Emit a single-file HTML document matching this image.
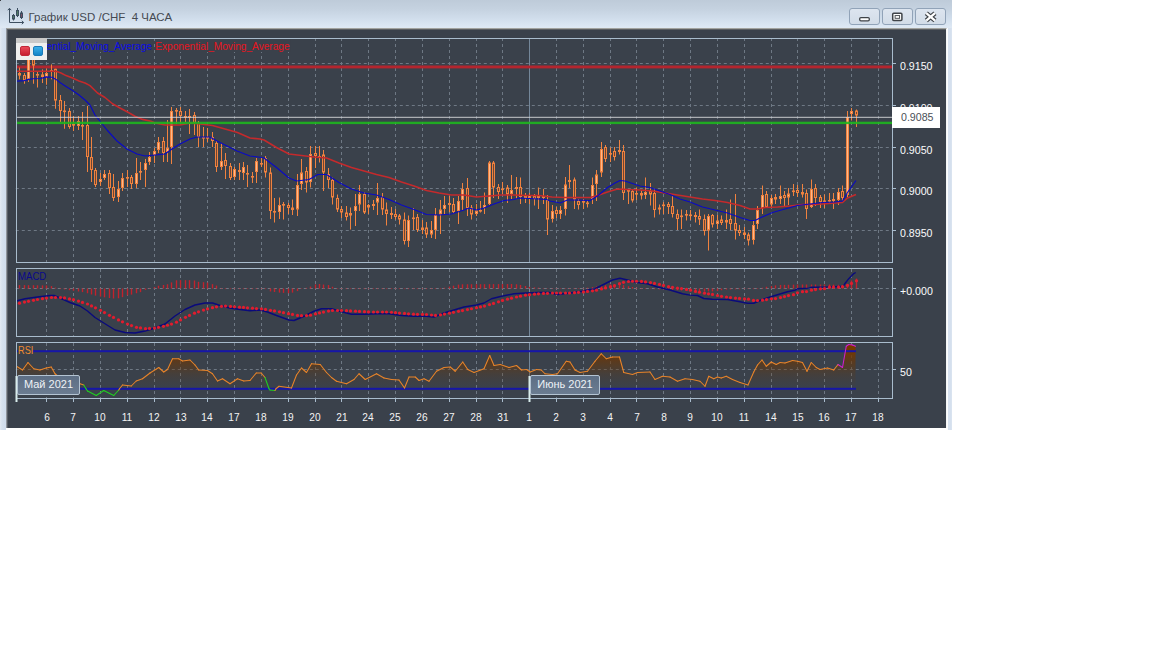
<!DOCTYPE html>
<html><head><meta charset="utf-8"><title>chart</title>
<style>
html,body{margin:0;padding:0;background:#fff;}
body{width:1152px;height:648px;overflow:hidden;position:relative;font-family:"Liberation Sans",sans-serif;}
#win{position:absolute;left:0;top:0;width:952px;height:428px;background:linear-gradient(#becbd9 0px,#c5d2e0 9px,#d1deec 19px,#dde8f4 27px,#dfe8f2 28px);}#win:before{content:"";position:absolute;left:0;top:0;width:1px;height:1px;background:#3a3d42;}
#lb{position:absolute;left:0;top:28px;width:6px;height:401.5px;background:linear-gradient(90deg,#e3eaf3 0px,#d6e1ee 2px,#cfdcec 6px);}
#rb{position:absolute;left:947px;top:28px;width:5px;height:402px;background:linear-gradient(90deg,#fbfcfd 0px,#fbfcfd 1px,#d5e0ee 1px,#d5e0ee 4px,#dde6f1 5px);}
#panel{position:absolute;left:6px;top:28px;width:941px;height:400px;box-sizing:border-box;background:#3a414b;border-left:1px solid #8f949b;border-top:1px solid #a2a39f;border-right:1px solid #f4f6f8;}#panel:before{content:"";position:absolute;left:0;right:0;top:0;height:1px;background:#5d6064;}#panel:after{content:"";position:absolute;left:0;top:1px;bottom:0;width:1px;background:#565c65;}
#title{position:absolute;left:28.5px;top:9.5px;font-size:11.5px;color:#454a52;white-space:pre;letter-spacing:0px;line-height:15px;}
.btn{position:absolute;top:8px;width:30.5px;height:17px;border:1px solid #91a3b8;border-radius:3px;background:linear-gradient(#dde5ef,#d2dce8);box-sizing:border-box;}
svg{position:absolute;left:0;top:0;}
.dl{position:absolute;top:411px;width:30px;text-align:center;font-size:11px;line-height:13px;color:#f4f4f4;transform:scaleX(0.92);}
.pl{position:absolute;left:900px;font-size:11px;line-height:13px;color:#fbfbfb;transform:scaleX(0.966);transform-origin:0 0;}
#legend{position:absolute;left:16px;top:38px;width:31px;height:22px;background:#efefef;}
#legend:before{content:"";position:absolute;left:0;top:0;right:0;height:4.5px;background:#c9c9c9;}
.ic{position:absolute;top:8px;width:10px;height:10px;border-radius:2px;}
.lt{position:absolute;top:39px;height:13px;font-size:10.5px;line-height:15px;white-space:pre;background:#3a414b;transform:scaleX(0.965);transform-origin:0 0;overflow:hidden;}
#cur{position:absolute;left:892px;top:107px;width:48px;height:21px;background:#fff;color:#4a4f57;font-size:11px;line-height:21px;padding-left:9px;box-sizing:border-box;}
.mon{position:absolute;top:375px;height:19.5px;box-sizing:border-box;border:1px solid #b4c4d3;border-radius:2px;background:linear-gradient(#5d6e84,#6b7c91);color:#eef2f6;font-size:11px;line-height:17px;text-align:center;letter-spacing:0;}
.ind{position:absolute;left:18px;font-size:11px;line-height:13px;transform-origin:0 0;background:#3a414b;}
</style></head><body>
<div id="win"></div><div id="lb"></div><div id="rb"></div>
<div id="title">График USD /CHF  4 ЧАСА</div>
<svg width="28" height="28" viewBox="0 0 28 28" style="left:0;top:0"><g fill="none" stroke="#3c4e60" stroke-width="1"><path d="M9.5 8.5V22.5H23.5"/><path d="M7.8 10.2L9.5 8.3L11.2 10.2M21.8 20.8L23.7 22.5L21.8 24.2"/><path d="M13.5 14V20.5M17.5 8V17M21.5 11V19"/></g><g fill="#4f7a63" stroke="#3c4e60" stroke-width="1"><rect x="12.5" y="15.5" width="2" height="3.5"/><rect x="16.5" y="10.5" width="2" height="5"/><rect x="20.5" y="13" width="2" height="4.5" fill="#7a5068"/></g></svg>
<div class="btn" style="left:849px"><svg width="30" height="16" style="left:-1px;top:-1px"><rect x="10.7" y="9.6" width="9.6" height="3.2" rx="1.2" fill="#fff" stroke="#3f4348" stroke-width="1.3"/></svg></div>
<div class="btn" style="left:882px"><svg width="30" height="16" style="left:-1px;top:-1px"><rect x="10.7" y="5.3" width="9.2" height="7.2" rx="1" fill="#fff" stroke="#3f4348" stroke-width="1.5"/><rect x="13.1" y="7.6" width="4.5" height="2.7" fill="#fff" stroke="#3f4348" stroke-width="0.9"/></svg></div>
<div class="btn" style="left:915px"><svg width="30" height="16" style="left:-1px;top:-1px"><path d="M11.3 5.2L20 12.6M20 5.2L11.3 12.6" stroke="#3f4348" stroke-width="4.6"/><path d="M11.3 5.2L20 12.6M20 5.2L11.3 12.6" stroke="#fff" stroke-width="2.3"/></svg></div>
<div id="panel"></div>
<svg width="952" height="430" viewBox="0 0 952 430">
<line x1="46.5" y1="38" x2="46.5" y2="262" stroke="#6e7884" stroke-width="1" stroke-dasharray="3 3"/>
<line x1="73.5" y1="38" x2="73.5" y2="262" stroke="#6e7884" stroke-width="1" stroke-dasharray="3 3"/>
<line x1="100.5" y1="38" x2="100.5" y2="262" stroke="#6e7884" stroke-width="1" stroke-dasharray="3 3"/>
<line x1="127.5" y1="38" x2="127.5" y2="262" stroke="#6e7884" stroke-width="1" stroke-dasharray="3 3"/>
<line x1="154.5" y1="38" x2="154.5" y2="262" stroke="#6e7884" stroke-width="1" stroke-dasharray="3 3"/>
<line x1="180.5" y1="38" x2="180.5" y2="262" stroke="#6e7884" stroke-width="1" stroke-dasharray="3 3"/>
<line x1="207.5" y1="38" x2="207.5" y2="262" stroke="#6e7884" stroke-width="1" stroke-dasharray="3 3"/>
<line x1="234.5" y1="38" x2="234.5" y2="262" stroke="#6e7884" stroke-width="1" stroke-dasharray="3 3"/>
<line x1="261.5" y1="38" x2="261.5" y2="262" stroke="#6e7884" stroke-width="1" stroke-dasharray="3 3"/>
<line x1="288.5" y1="38" x2="288.5" y2="262" stroke="#6e7884" stroke-width="1" stroke-dasharray="3 3"/>
<line x1="315.5" y1="38" x2="315.5" y2="262" stroke="#6e7884" stroke-width="1" stroke-dasharray="3 3"/>
<line x1="341.5" y1="38" x2="341.5" y2="262" stroke="#6e7884" stroke-width="1" stroke-dasharray="3 3"/>
<line x1="368.5" y1="38" x2="368.5" y2="262" stroke="#6e7884" stroke-width="1" stroke-dasharray="3 3"/>
<line x1="395.5" y1="38" x2="395.5" y2="262" stroke="#6e7884" stroke-width="1" stroke-dasharray="3 3"/>
<line x1="422.5" y1="38" x2="422.5" y2="262" stroke="#6e7884" stroke-width="1" stroke-dasharray="3 3"/>
<line x1="449.5" y1="38" x2="449.5" y2="262" stroke="#6e7884" stroke-width="1" stroke-dasharray="3 3"/>
<line x1="476.5" y1="38" x2="476.5" y2="262" stroke="#6e7884" stroke-width="1" stroke-dasharray="3 3"/>
<line x1="502.5" y1="38" x2="502.5" y2="262" stroke="#6e7884" stroke-width="1" stroke-dasharray="3 3"/>
<line x1="529.5" y1="38" x2="529.5" y2="262" stroke="#74879a" stroke-width="1"/>
<line x1="556.5" y1="38" x2="556.5" y2="262" stroke="#6e7884" stroke-width="1" stroke-dasharray="3 3"/>
<line x1="583.5" y1="38" x2="583.5" y2="262" stroke="#6e7884" stroke-width="1" stroke-dasharray="3 3"/>
<line x1="610.5" y1="38" x2="610.5" y2="262" stroke="#6e7884" stroke-width="1" stroke-dasharray="3 3"/>
<line x1="636.5" y1="38" x2="636.5" y2="262" stroke="#6e7884" stroke-width="1" stroke-dasharray="3 3"/>
<line x1="663.5" y1="38" x2="663.5" y2="262" stroke="#6e7884" stroke-width="1" stroke-dasharray="3 3"/>
<line x1="690.5" y1="38" x2="690.5" y2="262" stroke="#6e7884" stroke-width="1" stroke-dasharray="3 3"/>
<line x1="717.5" y1="38" x2="717.5" y2="262" stroke="#6e7884" stroke-width="1" stroke-dasharray="3 3"/>
<line x1="744.5" y1="38" x2="744.5" y2="262" stroke="#6e7884" stroke-width="1" stroke-dasharray="3 3"/>
<line x1="771.5" y1="38" x2="771.5" y2="262" stroke="#6e7884" stroke-width="1" stroke-dasharray="3 3"/>
<line x1="797.5" y1="38" x2="797.5" y2="262" stroke="#6e7884" stroke-width="1" stroke-dasharray="3 3"/>
<line x1="824.5" y1="38" x2="824.5" y2="262" stroke="#6e7884" stroke-width="1" stroke-dasharray="3 3"/>
<line x1="851.5" y1="38" x2="851.5" y2="262" stroke="#6e7884" stroke-width="1" stroke-dasharray="3 3"/>
<line x1="878.5" y1="38" x2="878.5" y2="262" stroke="#6e7884" stroke-width="1" stroke-dasharray="3 3"/>
<line x1="15.8" y1="63.5" x2="892" y2="63.5" stroke="#6e7884" stroke-width="1" stroke-dasharray="3 3"/>
<line x1="892" y1="63.5" x2="896" y2="63.5" stroke="#a9bccd" stroke-width="1"/>
<line x1="15.8" y1="105.5" x2="892" y2="105.5" stroke="#6e7884" stroke-width="1" stroke-dasharray="3 3"/>
<line x1="892" y1="105.5" x2="896" y2="105.5" stroke="#a9bccd" stroke-width="1"/>
<line x1="15.8" y1="147.5" x2="892" y2="147.5" stroke="#6e7884" stroke-width="1" stroke-dasharray="3 3"/>
<line x1="892" y1="147.5" x2="896" y2="147.5" stroke="#a9bccd" stroke-width="1"/>
<line x1="15.8" y1="188.5" x2="892" y2="188.5" stroke="#6e7884" stroke-width="1" stroke-dasharray="3 3"/>
<line x1="892" y1="188.5" x2="896" y2="188.5" stroke="#a9bccd" stroke-width="1"/>
<line x1="15.8" y1="230.5" x2="892" y2="230.5" stroke="#6e7884" stroke-width="1" stroke-dasharray="3 3"/>
<line x1="892" y1="230.5" x2="896" y2="230.5" stroke="#a9bccd" stroke-width="1"/>
<line x1="46.5" y1="269" x2="46.5" y2="336" stroke="#6e7884" stroke-width="1" stroke-dasharray="3 3"/>
<line x1="73.5" y1="269" x2="73.5" y2="336" stroke="#6e7884" stroke-width="1" stroke-dasharray="3 3"/>
<line x1="100.5" y1="269" x2="100.5" y2="336" stroke="#6e7884" stroke-width="1" stroke-dasharray="3 3"/>
<line x1="127.5" y1="269" x2="127.5" y2="336" stroke="#6e7884" stroke-width="1" stroke-dasharray="3 3"/>
<line x1="154.5" y1="269" x2="154.5" y2="336" stroke="#6e7884" stroke-width="1" stroke-dasharray="3 3"/>
<line x1="180.5" y1="269" x2="180.5" y2="336" stroke="#6e7884" stroke-width="1" stroke-dasharray="3 3"/>
<line x1="207.5" y1="269" x2="207.5" y2="336" stroke="#6e7884" stroke-width="1" stroke-dasharray="3 3"/>
<line x1="234.5" y1="269" x2="234.5" y2="336" stroke="#6e7884" stroke-width="1" stroke-dasharray="3 3"/>
<line x1="261.5" y1="269" x2="261.5" y2="336" stroke="#6e7884" stroke-width="1" stroke-dasharray="3 3"/>
<line x1="288.5" y1="269" x2="288.5" y2="336" stroke="#6e7884" stroke-width="1" stroke-dasharray="3 3"/>
<line x1="315.5" y1="269" x2="315.5" y2="336" stroke="#6e7884" stroke-width="1" stroke-dasharray="3 3"/>
<line x1="341.5" y1="269" x2="341.5" y2="336" stroke="#6e7884" stroke-width="1" stroke-dasharray="3 3"/>
<line x1="368.5" y1="269" x2="368.5" y2="336" stroke="#6e7884" stroke-width="1" stroke-dasharray="3 3"/>
<line x1="395.5" y1="269" x2="395.5" y2="336" stroke="#6e7884" stroke-width="1" stroke-dasharray="3 3"/>
<line x1="422.5" y1="269" x2="422.5" y2="336" stroke="#6e7884" stroke-width="1" stroke-dasharray="3 3"/>
<line x1="449.5" y1="269" x2="449.5" y2="336" stroke="#6e7884" stroke-width="1" stroke-dasharray="3 3"/>
<line x1="476.5" y1="269" x2="476.5" y2="336" stroke="#6e7884" stroke-width="1" stroke-dasharray="3 3"/>
<line x1="502.5" y1="269" x2="502.5" y2="336" stroke="#6e7884" stroke-width="1" stroke-dasharray="3 3"/>
<line x1="529.5" y1="269" x2="529.5" y2="336" stroke="#74879a" stroke-width="1"/>
<line x1="556.5" y1="269" x2="556.5" y2="336" stroke="#6e7884" stroke-width="1" stroke-dasharray="3 3"/>
<line x1="583.5" y1="269" x2="583.5" y2="336" stroke="#6e7884" stroke-width="1" stroke-dasharray="3 3"/>
<line x1="610.5" y1="269" x2="610.5" y2="336" stroke="#6e7884" stroke-width="1" stroke-dasharray="3 3"/>
<line x1="636.5" y1="269" x2="636.5" y2="336" stroke="#6e7884" stroke-width="1" stroke-dasharray="3 3"/>
<line x1="663.5" y1="269" x2="663.5" y2="336" stroke="#6e7884" stroke-width="1" stroke-dasharray="3 3"/>
<line x1="690.5" y1="269" x2="690.5" y2="336" stroke="#6e7884" stroke-width="1" stroke-dasharray="3 3"/>
<line x1="717.5" y1="269" x2="717.5" y2="336" stroke="#6e7884" stroke-width="1" stroke-dasharray="3 3"/>
<line x1="744.5" y1="269" x2="744.5" y2="336" stroke="#6e7884" stroke-width="1" stroke-dasharray="3 3"/>
<line x1="771.5" y1="269" x2="771.5" y2="336" stroke="#6e7884" stroke-width="1" stroke-dasharray="3 3"/>
<line x1="797.5" y1="269" x2="797.5" y2="336" stroke="#6e7884" stroke-width="1" stroke-dasharray="3 3"/>
<line x1="824.5" y1="269" x2="824.5" y2="336" stroke="#6e7884" stroke-width="1" stroke-dasharray="3 3"/>
<line x1="851.5" y1="269" x2="851.5" y2="336" stroke="#6e7884" stroke-width="1" stroke-dasharray="3 3"/>
<line x1="878.5" y1="269" x2="878.5" y2="336" stroke="#6e7884" stroke-width="1" stroke-dasharray="3 3"/>
<line x1="15.8" y1="288.5" x2="892" y2="288.5" stroke="#6e7884" stroke-width="1" stroke-dasharray="3 3"/>
<line x1="892" y1="288.5" x2="896" y2="288.5" stroke="#a9bccd" stroke-width="1"/>
<line x1="46.5" y1="343" x2="46.5" y2="398" stroke="#6e7884" stroke-width="1" stroke-dasharray="3 3"/>
<line x1="73.5" y1="343" x2="73.5" y2="398" stroke="#6e7884" stroke-width="1" stroke-dasharray="3 3"/>
<line x1="100.5" y1="343" x2="100.5" y2="398" stroke="#6e7884" stroke-width="1" stroke-dasharray="3 3"/>
<line x1="127.5" y1="343" x2="127.5" y2="398" stroke="#6e7884" stroke-width="1" stroke-dasharray="3 3"/>
<line x1="154.5" y1="343" x2="154.5" y2="398" stroke="#6e7884" stroke-width="1" stroke-dasharray="3 3"/>
<line x1="180.5" y1="343" x2="180.5" y2="398" stroke="#6e7884" stroke-width="1" stroke-dasharray="3 3"/>
<line x1="207.5" y1="343" x2="207.5" y2="398" stroke="#6e7884" stroke-width="1" stroke-dasharray="3 3"/>
<line x1="234.5" y1="343" x2="234.5" y2="398" stroke="#6e7884" stroke-width="1" stroke-dasharray="3 3"/>
<line x1="261.5" y1="343" x2="261.5" y2="398" stroke="#6e7884" stroke-width="1" stroke-dasharray="3 3"/>
<line x1="288.5" y1="343" x2="288.5" y2="398" stroke="#6e7884" stroke-width="1" stroke-dasharray="3 3"/>
<line x1="315.5" y1="343" x2="315.5" y2="398" stroke="#6e7884" stroke-width="1" stroke-dasharray="3 3"/>
<line x1="341.5" y1="343" x2="341.5" y2="398" stroke="#6e7884" stroke-width="1" stroke-dasharray="3 3"/>
<line x1="368.5" y1="343" x2="368.5" y2="398" stroke="#6e7884" stroke-width="1" stroke-dasharray="3 3"/>
<line x1="395.5" y1="343" x2="395.5" y2="398" stroke="#6e7884" stroke-width="1" stroke-dasharray="3 3"/>
<line x1="422.5" y1="343" x2="422.5" y2="398" stroke="#6e7884" stroke-width="1" stroke-dasharray="3 3"/>
<line x1="449.5" y1="343" x2="449.5" y2="398" stroke="#6e7884" stroke-width="1" stroke-dasharray="3 3"/>
<line x1="476.5" y1="343" x2="476.5" y2="398" stroke="#6e7884" stroke-width="1" stroke-dasharray="3 3"/>
<line x1="502.5" y1="343" x2="502.5" y2="398" stroke="#6e7884" stroke-width="1" stroke-dasharray="3 3"/>
<line x1="529.5" y1="343" x2="529.5" y2="398" stroke="#74879a" stroke-width="1"/>
<line x1="556.5" y1="343" x2="556.5" y2="398" stroke="#6e7884" stroke-width="1" stroke-dasharray="3 3"/>
<line x1="583.5" y1="343" x2="583.5" y2="398" stroke="#6e7884" stroke-width="1" stroke-dasharray="3 3"/>
<line x1="610.5" y1="343" x2="610.5" y2="398" stroke="#6e7884" stroke-width="1" stroke-dasharray="3 3"/>
<line x1="636.5" y1="343" x2="636.5" y2="398" stroke="#6e7884" stroke-width="1" stroke-dasharray="3 3"/>
<line x1="663.5" y1="343" x2="663.5" y2="398" stroke="#6e7884" stroke-width="1" stroke-dasharray="3 3"/>
<line x1="690.5" y1="343" x2="690.5" y2="398" stroke="#6e7884" stroke-width="1" stroke-dasharray="3 3"/>
<line x1="717.5" y1="343" x2="717.5" y2="398" stroke="#6e7884" stroke-width="1" stroke-dasharray="3 3"/>
<line x1="744.5" y1="343" x2="744.5" y2="398" stroke="#6e7884" stroke-width="1" stroke-dasharray="3 3"/>
<line x1="771.5" y1="343" x2="771.5" y2="398" stroke="#6e7884" stroke-width="1" stroke-dasharray="3 3"/>
<line x1="797.5" y1="343" x2="797.5" y2="398" stroke="#6e7884" stroke-width="1" stroke-dasharray="3 3"/>
<line x1="824.5" y1="343" x2="824.5" y2="398" stroke="#6e7884" stroke-width="1" stroke-dasharray="3 3"/>
<line x1="851.5" y1="343" x2="851.5" y2="398" stroke="#6e7884" stroke-width="1" stroke-dasharray="3 3"/>
<line x1="878.5" y1="343" x2="878.5" y2="398" stroke="#6e7884" stroke-width="1" stroke-dasharray="3 3"/>
<line x1="15.8" y1="369.5" x2="892" y2="369.5" stroke="#6e7884" stroke-width="1" stroke-dasharray="3 3"/>
<line x1="892" y1="369.5" x2="896" y2="369.5" stroke="#a9bccd" stroke-width="1"/>
<defs><clipPath id="cm"><rect x="17" y="39" width="875" height="223"/></clipPath><linearGradient id="rsig" gradientUnits="userSpaceOnUse" x1="0" y1="350" x2="0" y2="390"><stop offset="0" stop-color="#763800" stop-opacity="1"/><stop offset="0.3" stop-color="#6c3604" stop-opacity="0.62"/><stop offset="0.6" stop-color="#683808" stop-opacity="0.24"/><stop offset="0.9" stop-color="#5a3a1a" stop-opacity="0.04"/><stop offset="1" stop-color="#5a3a1a" stop-opacity="0"/></linearGradient><clipPath id="cr"><rect x="17" y="343" width="875" height="55"/></clipPath></defs>
<g clip-path="url(#cm)">
<rect x="16" y="65.5" width="877" height="2.9" fill="#b3252e"/>
<line x1="19.5" y1="67.5" x2="19.5" y2="79.4" stroke="#f0823f" stroke-width="1"/>
<rect x="18.5" y="73.5" width="2" height="1.6" fill="#6e4633" stroke="#f0823f" stroke-width="1"/>
<line x1="24.5" y1="73" x2="24.5" y2="83.75" stroke="#f0823f" stroke-width="1"/>
<rect x="23.5" y="75.5" width="2" height="4.6" fill="#6e4633" stroke="#f0823f" stroke-width="1"/>
<line x1="28.5" y1="50" x2="28.5" y2="82" stroke="#f0823f" stroke-width="1"/>
<rect x="27.5" y="52.5" width="2" height="26.4" fill="#ffb98a" stroke="#f0823f" stroke-width="1"/>
<line x1="33.5" y1="52" x2="33.5" y2="83.75" stroke="#f0823f" stroke-width="1"/>
<rect x="32.5" y="54.5" width="2" height="10.6" fill="#6e4633" stroke="#f0823f" stroke-width="1"/>
<line x1="37.5" y1="71" x2="37.5" y2="87.5" stroke="#f0823f" stroke-width="1"/>
<rect x="36.5" y="74.5" width="2" height="0.6" fill="#6e4633" stroke="#f0823f" stroke-width="1"/>
<line x1="42.5" y1="69.4" x2="42.5" y2="83" stroke="#f0823f" stroke-width="1"/>
<rect x="41.5" y="74.9" width="2" height="1.6" fill="#6e4633" stroke="#f0823f" stroke-width="1"/>
<line x1="46.5" y1="68.75" x2="46.5" y2="84.75" stroke="#f0823f" stroke-width="1"/>
<rect x="45.5" y="73.5" width="2" height="3" fill="#ffb98a" stroke="#f0823f" stroke-width="1"/>
<line x1="51.5" y1="64.4" x2="51.5" y2="79.4" stroke="#f0823f" stroke-width="1"/>
<rect x="50.5" y="70.5" width="2" height="0.6" fill="#ffb98a" stroke="#f0823f" stroke-width="1"/>
<line x1="55.5" y1="68.75" x2="55.5" y2="108.75" stroke="#f0823f" stroke-width="1"/>
<rect x="54.5" y="69.25" width="2" height="30.85" fill="#6e4633" stroke="#f0823f" stroke-width="1"/>
<line x1="60.5" y1="95" x2="60.5" y2="122" stroke="#f0823f" stroke-width="1"/>
<rect x="59.5" y="100.5" width="2" height="10" fill="#6e4633" stroke="#f0823f" stroke-width="1"/>
<line x1="64.5" y1="101" x2="64.5" y2="128.75" stroke="#f0823f" stroke-width="1"/>
<rect x="63.5" y="111" width="2" height="0.6" fill="#6e4633" stroke="#f0823f" stroke-width="1"/>
<line x1="69.5" y1="108" x2="69.5" y2="128.75" stroke="#f0823f" stroke-width="1"/>
<rect x="68.5" y="111.5" width="2" height="15" fill="#6e4633" stroke="#f0823f" stroke-width="1"/>
<line x1="73.5" y1="116" x2="73.5" y2="131" stroke="#f0823f" stroke-width="1"/>
<rect x="72.5" y="124.5" width="2" height="0.6" fill="#ffb98a" stroke="#f0823f" stroke-width="1"/>
<line x1="78.5" y1="116" x2="78.5" y2="130" stroke="#f0823f" stroke-width="1"/>
<rect x="77.5" y="121.5" width="2" height="4" fill="#ffb98a" stroke="#f0823f" stroke-width="1"/>
<line x1="82.5" y1="112" x2="82.5" y2="140" stroke="#f0823f" stroke-width="1"/>
<rect x="81.5" y="125.5" width="2" height="0.6" fill="#6e4633" stroke="#f0823f" stroke-width="1"/>
<line x1="87.5" y1="106" x2="87.5" y2="172" stroke="#f0823f" stroke-width="1"/>
<rect x="86.5" y="125.5" width="2" height="31" fill="#6e4633" stroke="#f0823f" stroke-width="1"/>
<line x1="91.5" y1="137" x2="91.5" y2="182" stroke="#f0823f" stroke-width="1"/>
<rect x="90.5" y="157.5" width="2" height="12" fill="#6e4633" stroke="#f0823f" stroke-width="1"/>
<line x1="95.5" y1="168" x2="95.5" y2="187" stroke="#f0823f" stroke-width="1"/>
<rect x="94.5" y="170.5" width="2" height="14" fill="#6e4633" stroke="#f0823f" stroke-width="1"/>
<line x1="100.5" y1="173" x2="100.5" y2="186" stroke="#f0823f" stroke-width="1"/>
<rect x="99.5" y="179.5" width="2" height="2" fill="#ffb98a" stroke="#f0823f" stroke-width="1"/>
<line x1="104.5" y1="170" x2="104.5" y2="180" stroke="#f0823f" stroke-width="1"/>
<rect x="103.5" y="174.5" width="2" height="3" fill="#ffb98a" stroke="#f0823f" stroke-width="1"/>
<line x1="109.5" y1="170" x2="109.5" y2="194" stroke="#f0823f" stroke-width="1"/>
<rect x="108.5" y="173.5" width="2" height="14" fill="#6e4633" stroke="#f0823f" stroke-width="1"/>
<line x1="113.5" y1="174" x2="113.5" y2="201" stroke="#f0823f" stroke-width="1"/>
<rect x="112.5" y="187.5" width="2" height="10" fill="#6e4633" stroke="#f0823f" stroke-width="1"/>
<line x1="118.5" y1="181" x2="118.5" y2="202" stroke="#f0823f" stroke-width="1"/>
<rect x="117.5" y="189.5" width="2" height="7" fill="#ffb98a" stroke="#f0823f" stroke-width="1"/>
<line x1="122.5" y1="173" x2="122.5" y2="191" stroke="#f0823f" stroke-width="1"/>
<rect x="121.5" y="178.5" width="2" height="9" fill="#ffb98a" stroke="#f0823f" stroke-width="1"/>
<line x1="127.5" y1="170" x2="127.5" y2="187" stroke="#f0823f" stroke-width="1"/>
<rect x="126.5" y="177.5" width="2" height="0.6" fill="#ffb98a" stroke="#f0823f" stroke-width="1"/>
<line x1="131.5" y1="175" x2="131.5" y2="189" stroke="#f0823f" stroke-width="1"/>
<rect x="130.5" y="177.5" width="2" height="6" fill="#6e4633" stroke="#f0823f" stroke-width="1"/>
<line x1="136.5" y1="158" x2="136.5" y2="188" stroke="#f0823f" stroke-width="1"/>
<rect x="135.5" y="173.5" width="2" height="10" fill="#ffb98a" stroke="#f0823f" stroke-width="1"/>
<line x1="140.5" y1="162" x2="140.5" y2="180" stroke="#f0823f" stroke-width="1"/>
<rect x="139.5" y="171.5" width="2" height="0.6" fill="#ffb98a" stroke="#f0823f" stroke-width="1"/>
<line x1="145.5" y1="159" x2="145.5" y2="187" stroke="#f0823f" stroke-width="1"/>
<rect x="144.5" y="163.5" width="2" height="6" fill="#ffb98a" stroke="#f0823f" stroke-width="1"/>
<line x1="149.5" y1="152" x2="149.5" y2="165" stroke="#f0823f" stroke-width="1"/>
<rect x="148.5" y="157.5" width="2" height="4" fill="#ffb98a" stroke="#f0823f" stroke-width="1"/>
<line x1="154.5" y1="148" x2="154.5" y2="163" stroke="#f0823f" stroke-width="1"/>
<rect x="153.5" y="151.5" width="2" height="3" fill="#ffb98a" stroke="#f0823f" stroke-width="1"/>
<line x1="158.5" y1="137" x2="158.5" y2="153" stroke="#f0823f" stroke-width="1"/>
<rect x="157.5" y="142.5" width="2" height="7" fill="#ffb98a" stroke="#f0823f" stroke-width="1"/>
<line x1="163.5" y1="137" x2="163.5" y2="162" stroke="#f0823f" stroke-width="1"/>
<rect x="162.5" y="141.5" width="2" height="11" fill="#6e4633" stroke="#f0823f" stroke-width="1"/>
<line x1="167.5" y1="120" x2="167.5" y2="162" stroke="#f0823f" stroke-width="1"/>
<rect x="166.5" y="148.5" width="2" height="3" fill="#ffb98a" stroke="#f0823f" stroke-width="1"/>
<line x1="171.5" y1="107" x2="171.5" y2="164" stroke="#f0823f" stroke-width="1"/>
<rect x="170.5" y="111.5" width="2" height="35" fill="#ffb98a" stroke="#f0823f" stroke-width="1"/>
<line x1="176.5" y1="108" x2="176.5" y2="124" stroke="#f0823f" stroke-width="1"/>
<rect x="175.5" y="110.5" width="2" height="0.6" fill="#ffb98a" stroke="#f0823f" stroke-width="1"/>
<line x1="180.5" y1="107" x2="180.5" y2="123" stroke="#f0823f" stroke-width="1"/>
<rect x="179.5" y="111.5" width="2" height="4" fill="#6e4633" stroke="#f0823f" stroke-width="1"/>
<line x1="185.5" y1="111" x2="185.5" y2="122" stroke="#f0823f" stroke-width="1"/>
<rect x="184.5" y="116.5" width="2" height="0.6" fill="#6e4633" stroke="#f0823f" stroke-width="1"/>
<line x1="189.5" y1="109" x2="189.5" y2="134" stroke="#f0823f" stroke-width="1"/>
<rect x="188.5" y="116.5" width="2" height="0.6" fill="#ffb98a" stroke="#f0823f" stroke-width="1"/>
<line x1="194.5" y1="112" x2="194.5" y2="135" stroke="#f0823f" stroke-width="1"/>
<rect x="193.5" y="115.5" width="2" height="7" fill="#6e4633" stroke="#f0823f" stroke-width="1"/>
<line x1="198.5" y1="121" x2="198.5" y2="147" stroke="#f0823f" stroke-width="1"/>
<rect x="197.5" y="123.5" width="2" height="13" fill="#6e4633" stroke="#f0823f" stroke-width="1"/>
<line x1="203.5" y1="127" x2="203.5" y2="147" stroke="#f0823f" stroke-width="1"/>
<rect x="202.5" y="137.5" width="2" height="0.6" fill="#6e4633" stroke="#f0823f" stroke-width="1"/>
<line x1="207.5" y1="128" x2="207.5" y2="142" stroke="#f0823f" stroke-width="1"/>
<rect x="206.5" y="137.5" width="2" height="0.6" fill="#ffb98a" stroke="#f0823f" stroke-width="1"/>
<line x1="212.5" y1="132" x2="212.5" y2="147" stroke="#f0823f" stroke-width="1"/>
<rect x="211.5" y="137.5" width="2" height="3" fill="#6e4633" stroke="#f0823f" stroke-width="1"/>
<line x1="216.5" y1="141" x2="216.5" y2="172" stroke="#f0823f" stroke-width="1"/>
<rect x="215.5" y="143.5" width="2" height="23" fill="#6e4633" stroke="#f0823f" stroke-width="1"/>
<line x1="221.5" y1="143" x2="221.5" y2="170" stroke="#f0823f" stroke-width="1"/>
<rect x="220.5" y="161.5" width="2" height="5" fill="#ffb98a" stroke="#f0823f" stroke-width="1"/>
<line x1="225.5" y1="153" x2="225.5" y2="179" stroke="#f0823f" stroke-width="1"/>
<rect x="224.5" y="160.5" width="2" height="5" fill="#6e4633" stroke="#f0823f" stroke-width="1"/>
<line x1="230.5" y1="163" x2="230.5" y2="180" stroke="#f0823f" stroke-width="1"/>
<rect x="229.5" y="166.5" width="2" height="11" fill="#6e4633" stroke="#f0823f" stroke-width="1"/>
<line x1="234.5" y1="167" x2="234.5" y2="180" stroke="#f0823f" stroke-width="1"/>
<rect x="233.5" y="169.5" width="2" height="7" fill="#ffb98a" stroke="#f0823f" stroke-width="1"/>
<line x1="239.5" y1="163" x2="239.5" y2="180" stroke="#f0823f" stroke-width="1"/>
<rect x="238.5" y="170.5" width="2" height="1" fill="#6e4633" stroke="#f0823f" stroke-width="1"/>
<line x1="243.5" y1="162" x2="243.5" y2="180" stroke="#f0823f" stroke-width="1"/>
<rect x="242.5" y="167.5" width="2" height="5" fill="#ffb98a" stroke="#f0823f" stroke-width="1"/>
<line x1="247.5" y1="165" x2="247.5" y2="187" stroke="#f0823f" stroke-width="1"/>
<rect x="246.5" y="173.5" width="2" height="0.6" fill="#6e4633" stroke="#f0823f" stroke-width="1"/>
<line x1="252.5" y1="172" x2="252.5" y2="183" stroke="#f0823f" stroke-width="1"/>
<rect x="251.5" y="176.5" width="2" height="0.6" fill="#6e4633" stroke="#f0823f" stroke-width="1"/>
<line x1="256.5" y1="158" x2="256.5" y2="183" stroke="#f0823f" stroke-width="1"/>
<rect x="255.5" y="161.5" width="2" height="10" fill="#ffb98a" stroke="#f0823f" stroke-width="1"/>
<line x1="261.5" y1="157" x2="261.5" y2="167" stroke="#f0823f" stroke-width="1"/>
<rect x="260.5" y="163.5" width="2" height="0.6" fill="#6e4633" stroke="#f0823f" stroke-width="1"/>
<line x1="265.5" y1="156" x2="265.5" y2="177.5" stroke="#f0823f" stroke-width="1"/>
<rect x="264.5" y="158.5" width="2" height="13.5" fill="#6e4633" stroke="#f0823f" stroke-width="1"/>
<line x1="270.5" y1="167.5" x2="270.5" y2="219" stroke="#f0823f" stroke-width="1"/>
<rect x="269.5" y="173" width="2" height="37.5" fill="#6e4633" stroke="#f0823f" stroke-width="1"/>
<line x1="274.5" y1="198" x2="274.5" y2="222.5" stroke="#f0823f" stroke-width="1"/>
<rect x="273.5" y="211.5" width="2" height="0.6" fill="#6e4633" stroke="#f0823f" stroke-width="1"/>
<line x1="279.5" y1="197.5" x2="279.5" y2="219" stroke="#f0823f" stroke-width="1"/>
<rect x="278.5" y="205.5" width="2" height="6" fill="#ffb98a" stroke="#f0823f" stroke-width="1"/>
<line x1="283.5" y1="202" x2="283.5" y2="219.5" stroke="#f0823f" stroke-width="1"/>
<rect x="282.5" y="204.5" width="2" height="0.6" fill="#ffb98a" stroke="#f0823f" stroke-width="1"/>
<line x1="288.5" y1="203" x2="288.5" y2="214" stroke="#f0823f" stroke-width="1"/>
<rect x="287.5" y="205.5" width="2" height="2" fill="#6e4633" stroke="#f0823f" stroke-width="1"/>
<line x1="292.5" y1="199.5" x2="292.5" y2="215" stroke="#f0823f" stroke-width="1"/>
<rect x="291.5" y="208" width="2" height="1.5" fill="#6e4633" stroke="#f0823f" stroke-width="1"/>
<line x1="297.5" y1="174" x2="297.5" y2="216" stroke="#f0823f" stroke-width="1"/>
<rect x="296.5" y="185.5" width="2" height="23.5" fill="#ffb98a" stroke="#f0823f" stroke-width="1"/>
<line x1="301.5" y1="159" x2="301.5" y2="190" stroke="#f0823f" stroke-width="1"/>
<rect x="300.5" y="173" width="2" height="10.5" fill="#ffb98a" stroke="#f0823f" stroke-width="1"/>
<line x1="306.5" y1="167" x2="306.5" y2="192.5" stroke="#f0823f" stroke-width="1"/>
<rect x="305.5" y="171.5" width="2" height="10.5" fill="#6e4633" stroke="#f0823f" stroke-width="1"/>
<line x1="310.5" y1="146" x2="310.5" y2="187.5" stroke="#f0823f" stroke-width="1"/>
<rect x="309.5" y="154.5" width="2" height="27" fill="#ffb98a" stroke="#f0823f" stroke-width="1"/>
<line x1="315.5" y1="146" x2="315.5" y2="168" stroke="#f0823f" stroke-width="1"/>
<rect x="314.5" y="153.5" width="2" height="2" fill="#6e4633" stroke="#f0823f" stroke-width="1"/>
<line x1="319.5" y1="146" x2="319.5" y2="162.5" stroke="#f0823f" stroke-width="1"/>
<rect x="318.5" y="156.5" width="2" height="0.6" fill="#6e4633" stroke="#f0823f" stroke-width="1"/>
<line x1="323.5" y1="150" x2="323.5" y2="191" stroke="#f0823f" stroke-width="1"/>
<rect x="322.5" y="155" width="2" height="17" fill="#6e4633" stroke="#f0823f" stroke-width="1"/>
<line x1="328.5" y1="168" x2="328.5" y2="188" stroke="#f0823f" stroke-width="1"/>
<rect x="327.5" y="174.5" width="2" height="5" fill="#6e4633" stroke="#f0823f" stroke-width="1"/>
<line x1="332.5" y1="177.5" x2="332.5" y2="204.5" stroke="#f0823f" stroke-width="1"/>
<rect x="331.5" y="180.5" width="2" height="16.5" fill="#6e4633" stroke="#f0823f" stroke-width="1"/>
<line x1="337.5" y1="194.5" x2="337.5" y2="212" stroke="#f0823f" stroke-width="1"/>
<rect x="336.5" y="198.5" width="2" height="10.5" fill="#6e4633" stroke="#f0823f" stroke-width="1"/>
<line x1="341.5" y1="206" x2="341.5" y2="218" stroke="#f0823f" stroke-width="1"/>
<rect x="340.5" y="209.5" width="2" height="2.5" fill="#6e4633" stroke="#f0823f" stroke-width="1"/>
<line x1="346.5" y1="206" x2="346.5" y2="220.5" stroke="#f0823f" stroke-width="1"/>
<rect x="345.5" y="213" width="2" height="3.5" fill="#6e4633" stroke="#f0823f" stroke-width="1"/>
<line x1="350.5" y1="207.5" x2="350.5" y2="229.5" stroke="#f0823f" stroke-width="1"/>
<rect x="349.5" y="213.5" width="2" height="1.5" fill="#ffb98a" stroke="#f0823f" stroke-width="1"/>
<line x1="355.5" y1="194" x2="355.5" y2="226" stroke="#f0823f" stroke-width="1"/>
<rect x="354.5" y="206.5" width="2" height="4" fill="#ffb98a" stroke="#f0823f" stroke-width="1"/>
<line x1="359.5" y1="185" x2="359.5" y2="211" stroke="#f0823f" stroke-width="1"/>
<rect x="358.5" y="194.5" width="2" height="9.5" fill="#ffb98a" stroke="#f0823f" stroke-width="1"/>
<line x1="364.5" y1="192.5" x2="364.5" y2="214" stroke="#f0823f" stroke-width="1"/>
<rect x="363.5" y="194.5" width="2" height="17.5" fill="#6e4633" stroke="#f0823f" stroke-width="1"/>
<line x1="368.5" y1="204" x2="368.5" y2="214" stroke="#f0823f" stroke-width="1"/>
<rect x="367.5" y="205.5" width="2" height="1.5" fill="#ffb98a" stroke="#f0823f" stroke-width="1"/>
<line x1="373.5" y1="200" x2="373.5" y2="210" stroke="#f0823f" stroke-width="1"/>
<rect x="372.5" y="204.5" width="2" height="1" fill="#6e4633" stroke="#f0823f" stroke-width="1"/>
<line x1="377.5" y1="183" x2="377.5" y2="215" stroke="#f0823f" stroke-width="1"/>
<rect x="376.5" y="198.5" width="2" height="3.5" fill="#ffb98a" stroke="#f0823f" stroke-width="1"/>
<line x1="382.5" y1="193" x2="382.5" y2="215" stroke="#f0823f" stroke-width="1"/>
<rect x="381.5" y="197.5" width="2" height="11.5" fill="#6e4633" stroke="#f0823f" stroke-width="1"/>
<line x1="386.5" y1="202.5" x2="386.5" y2="225.5" stroke="#f0823f" stroke-width="1"/>
<rect x="385.5" y="210" width="2" height="3.5" fill="#6e4633" stroke="#f0823f" stroke-width="1"/>
<line x1="391.5" y1="207" x2="391.5" y2="219" stroke="#f0823f" stroke-width="1"/>
<rect x="390.5" y="213.5" width="2" height="1" fill="#6e4633" stroke="#f0823f" stroke-width="1"/>
<line x1="395.5" y1="209" x2="395.5" y2="219.5" stroke="#f0823f" stroke-width="1"/>
<rect x="394.5" y="214.5" width="2" height="2" fill="#6e4633" stroke="#f0823f" stroke-width="1"/>
<line x1="399.5" y1="214" x2="399.5" y2="224.5" stroke="#f0823f" stroke-width="1"/>
<rect x="398.5" y="216" width="2" height="3" fill="#6e4633" stroke="#f0823f" stroke-width="1"/>
<line x1="404.5" y1="212.5" x2="404.5" y2="244.5" stroke="#f0823f" stroke-width="1"/>
<rect x="403.5" y="220" width="2" height="20.5" fill="#6e4633" stroke="#f0823f" stroke-width="1"/>
<line x1="408.5" y1="215.5" x2="408.5" y2="247" stroke="#f0823f" stroke-width="1"/>
<rect x="407.5" y="220.5" width="2" height="20" fill="#ffb98a" stroke="#f0823f" stroke-width="1"/>
<line x1="413.5" y1="208" x2="413.5" y2="230" stroke="#f0823f" stroke-width="1"/>
<rect x="412.5" y="218" width="2" height="0.6" fill="#ffb98a" stroke="#f0823f" stroke-width="1"/>
<line x1="417.5" y1="214" x2="417.5" y2="232" stroke="#f0823f" stroke-width="1"/>
<rect x="416.5" y="217.5" width="2" height="12" fill="#6e4633" stroke="#f0823f" stroke-width="1"/>
<line x1="422.5" y1="220" x2="422.5" y2="234" stroke="#f0823f" stroke-width="1"/>
<rect x="421.5" y="228" width="2" height="1.5" fill="#ffb98a" stroke="#f0823f" stroke-width="1"/>
<line x1="426.5" y1="222" x2="426.5" y2="238" stroke="#f0823f" stroke-width="1"/>
<rect x="425.5" y="228" width="2" height="6" fill="#6e4633" stroke="#f0823f" stroke-width="1"/>
<line x1="431.5" y1="221" x2="431.5" y2="238" stroke="#f0823f" stroke-width="1"/>
<rect x="430.5" y="230.5" width="2" height="3.5" fill="#ffb98a" stroke="#f0823f" stroke-width="1"/>
<line x1="435.5" y1="208" x2="435.5" y2="239" stroke="#f0823f" stroke-width="1"/>
<rect x="434.5" y="215.5" width="2" height="14" fill="#ffb98a" stroke="#f0823f" stroke-width="1"/>
<line x1="440.5" y1="200" x2="440.5" y2="234" stroke="#f0823f" stroke-width="1"/>
<rect x="439.5" y="210" width="2" height="4" fill="#ffb98a" stroke="#f0823f" stroke-width="1"/>
<line x1="444.5" y1="196" x2="444.5" y2="214" stroke="#f0823f" stroke-width="1"/>
<rect x="443.5" y="205.5" width="2" height="3" fill="#ffb98a" stroke="#f0823f" stroke-width="1"/>
<line x1="449.5" y1="196" x2="449.5" y2="212" stroke="#f0823f" stroke-width="1"/>
<rect x="448.5" y="203.5" width="2" height="1" fill="#ffb98a" stroke="#f0823f" stroke-width="1"/>
<line x1="453.5" y1="198" x2="453.5" y2="214" stroke="#f0823f" stroke-width="1"/>
<rect x="452.5" y="204.5" width="2" height="7" fill="#6e4633" stroke="#f0823f" stroke-width="1"/>
<line x1="458.5" y1="196" x2="458.5" y2="224" stroke="#f0823f" stroke-width="1"/>
<rect x="457.5" y="201.5" width="2" height="9" fill="#ffb98a" stroke="#f0823f" stroke-width="1"/>
<line x1="462.5" y1="183" x2="462.5" y2="210" stroke="#f0823f" stroke-width="1"/>
<rect x="461.5" y="189.5" width="2" height="10" fill="#ffb98a" stroke="#f0823f" stroke-width="1"/>
<line x1="467.5" y1="178" x2="467.5" y2="216" stroke="#f0823f" stroke-width="1"/>
<rect x="466.5" y="188.5" width="2" height="19" fill="#6e4633" stroke="#f0823f" stroke-width="1"/>
<line x1="471.5" y1="205" x2="471.5" y2="219.5" stroke="#f0823f" stroke-width="1"/>
<rect x="470.5" y="208" width="2" height="6" fill="#6e4633" stroke="#f0823f" stroke-width="1"/>
<line x1="476.5" y1="204" x2="476.5" y2="216" stroke="#f0823f" stroke-width="1"/>
<rect x="475.5" y="211" width="2" height="2.5" fill="#ffb98a" stroke="#f0823f" stroke-width="1"/>
<line x1="480.5" y1="201" x2="480.5" y2="212.5" stroke="#f0823f" stroke-width="1"/>
<rect x="479.5" y="210.5" width="2" height="0.6" fill="#6e4633" stroke="#f0823f" stroke-width="1"/>
<line x1="484.5" y1="192.5" x2="484.5" y2="214" stroke="#f0823f" stroke-width="1"/>
<rect x="483.5" y="205.5" width="2" height="2" fill="#ffb98a" stroke="#f0823f" stroke-width="1"/>
<line x1="489.5" y1="161" x2="489.5" y2="205" stroke="#f0823f" stroke-width="1"/>
<rect x="488.5" y="163" width="2" height="40.5" fill="#ffb98a" stroke="#f0823f" stroke-width="1"/>
<line x1="493.5" y1="161" x2="493.5" y2="198" stroke="#f0823f" stroke-width="1"/>
<rect x="492.5" y="163" width="2" height="24" fill="#6e4633" stroke="#f0823f" stroke-width="1"/>
<line x1="498.5" y1="184" x2="498.5" y2="199" stroke="#f0823f" stroke-width="1"/>
<rect x="497.5" y="187.5" width="2" height="4" fill="#6e4633" stroke="#f0823f" stroke-width="1"/>
<line x1="502.5" y1="182" x2="502.5" y2="194" stroke="#f0823f" stroke-width="1"/>
<rect x="501.5" y="189" width="2" height="0.6" fill="#ffb98a" stroke="#f0823f" stroke-width="1"/>
<line x1="507.5" y1="185" x2="507.5" y2="203" stroke="#f0823f" stroke-width="1"/>
<rect x="506.5" y="188" width="2" height="6" fill="#6e4633" stroke="#f0823f" stroke-width="1"/>
<line x1="511.5" y1="175" x2="511.5" y2="199" stroke="#f0823f" stroke-width="1"/>
<rect x="510.5" y="190.5" width="2" height="3" fill="#ffb98a" stroke="#f0823f" stroke-width="1"/>
<line x1="516.5" y1="177" x2="516.5" y2="199" stroke="#f0823f" stroke-width="1"/>
<rect x="515.5" y="187.5" width="2" height="1" fill="#ffb98a" stroke="#f0823f" stroke-width="1"/>
<line x1="520.5" y1="177.5" x2="520.5" y2="204" stroke="#f0823f" stroke-width="1"/>
<rect x="519.5" y="187.5" width="2" height="9" fill="#6e4633" stroke="#f0823f" stroke-width="1"/>
<line x1="525.5" y1="193" x2="525.5" y2="203" stroke="#f0823f" stroke-width="1"/>
<rect x="524.5" y="196.5" width="2" height="1" fill="#6e4633" stroke="#f0823f" stroke-width="1"/>
<line x1="529.5" y1="193" x2="529.5" y2="204" stroke="#f0823f" stroke-width="1"/>
<rect x="528.5" y="195.5" width="2" height="2" fill="#ffb98a" stroke="#f0823f" stroke-width="1"/>
<line x1="534.5" y1="194" x2="534.5" y2="205.5" stroke="#f0823f" stroke-width="1"/>
<rect x="533.5" y="196.5" width="2" height="2" fill="#6e4633" stroke="#f0823f" stroke-width="1"/>
<line x1="538.5" y1="187.5" x2="538.5" y2="209" stroke="#f0823f" stroke-width="1"/>
<rect x="537.5" y="196" width="2" height="1.5" fill="#ffb98a" stroke="#f0823f" stroke-width="1"/>
<line x1="543.5" y1="189" x2="543.5" y2="204" stroke="#f0823f" stroke-width="1"/>
<rect x="542.5" y="196.5" width="2" height="1" fill="#6e4633" stroke="#f0823f" stroke-width="1"/>
<line x1="547.5" y1="195" x2="547.5" y2="235" stroke="#f0823f" stroke-width="1"/>
<rect x="546.5" y="200.5" width="2" height="18.5" fill="#6e4633" stroke="#f0823f" stroke-width="1"/>
<line x1="552.5" y1="205" x2="552.5" y2="222.5" stroke="#f0823f" stroke-width="1"/>
<rect x="551.5" y="211.5" width="2" height="7" fill="#ffb98a" stroke="#f0823f" stroke-width="1"/>
<line x1="556.5" y1="207" x2="556.5" y2="218" stroke="#f0823f" stroke-width="1"/>
<rect x="555.5" y="210.5" width="2" height="3" fill="#6e4633" stroke="#f0823f" stroke-width="1"/>
<line x1="560.5" y1="206" x2="560.5" y2="219" stroke="#f0823f" stroke-width="1"/>
<rect x="559.5" y="210.5" width="2" height="3" fill="#ffb98a" stroke="#f0823f" stroke-width="1"/>
<line x1="565.5" y1="177" x2="565.5" y2="215.5" stroke="#f0823f" stroke-width="1"/>
<rect x="564.5" y="185" width="2" height="23.5" fill="#ffb98a" stroke="#f0823f" stroke-width="1"/>
<line x1="569.5" y1="165" x2="569.5" y2="188" stroke="#f0823f" stroke-width="1"/>
<rect x="568.5" y="180.5" width="2" height="1" fill="#ffb98a" stroke="#f0823f" stroke-width="1"/>
<line x1="574.5" y1="177.5" x2="574.5" y2="209" stroke="#f0823f" stroke-width="1"/>
<rect x="573.5" y="180" width="2" height="19" fill="#6e4633" stroke="#f0823f" stroke-width="1"/>
<line x1="578.5" y1="199" x2="578.5" y2="209.5" stroke="#f0823f" stroke-width="1"/>
<rect x="577.5" y="201.5" width="2" height="3" fill="#6e4633" stroke="#f0823f" stroke-width="1"/>
<line x1="583.5" y1="199" x2="583.5" y2="209" stroke="#f0823f" stroke-width="1"/>
<rect x="582.5" y="201.5" width="2" height="0.6" fill="#ffb98a" stroke="#f0823f" stroke-width="1"/>
<line x1="587.5" y1="200" x2="587.5" y2="207.5" stroke="#f0823f" stroke-width="1"/>
<rect x="586.5" y="203" width="2" height="0.6" fill="#6e4633" stroke="#f0823f" stroke-width="1"/>
<line x1="592.5" y1="177.5" x2="592.5" y2="204" stroke="#f0823f" stroke-width="1"/>
<rect x="591.5" y="185.5" width="2" height="13" fill="#ffb98a" stroke="#f0823f" stroke-width="1"/>
<line x1="596.5" y1="170" x2="596.5" y2="201" stroke="#f0823f" stroke-width="1"/>
<rect x="595.5" y="175" width="2" height="8.5" fill="#ffb98a" stroke="#f0823f" stroke-width="1"/>
<line x1="601.5" y1="142" x2="601.5" y2="177" stroke="#f0823f" stroke-width="1"/>
<rect x="600.5" y="149.5" width="2" height="22.5" fill="#ffb98a" stroke="#f0823f" stroke-width="1"/>
<line x1="605.5" y1="145" x2="605.5" y2="162" stroke="#f0823f" stroke-width="1"/>
<rect x="604.5" y="147.5" width="2" height="11" fill="#6e4633" stroke="#f0823f" stroke-width="1"/>
<line x1="610.5" y1="147.5" x2="610.5" y2="162" stroke="#f0823f" stroke-width="1"/>
<rect x="609.5" y="153.5" width="2" height="0.6" fill="#ffb98a" stroke="#f0823f" stroke-width="1"/>
<line x1="614.5" y1="147" x2="614.5" y2="160.5" stroke="#f0823f" stroke-width="1"/>
<rect x="613.5" y="151.5" width="2" height="5" fill="#6e4633" stroke="#f0823f" stroke-width="1"/>
<line x1="619.5" y1="140" x2="619.5" y2="154.5" stroke="#f0823f" stroke-width="1"/>
<rect x="618.5" y="150.5" width="2" height="1" fill="#ffb98a" stroke="#f0823f" stroke-width="1"/>
<line x1="623.5" y1="145" x2="623.5" y2="200" stroke="#f0823f" stroke-width="1"/>
<rect x="622.5" y="151.5" width="2" height="41" fill="#6e4633" stroke="#f0823f" stroke-width="1"/>
<line x1="628.5" y1="189.5" x2="628.5" y2="204" stroke="#f0823f" stroke-width="1"/>
<rect x="627.5" y="190.5" width="2" height="0.6" fill="#ffb98a" stroke="#f0823f" stroke-width="1"/>
<line x1="632.5" y1="189" x2="632.5" y2="202.5" stroke="#f0823f" stroke-width="1"/>
<rect x="631.5" y="191.5" width="2" height="8.5" fill="#6e4633" stroke="#f0823f" stroke-width="1"/>
<line x1="636.5" y1="187.5" x2="636.5" y2="200" stroke="#f0823f" stroke-width="1"/>
<rect x="635.5" y="193.5" width="2" height="0.6" fill="#ffb98a" stroke="#f0823f" stroke-width="1"/>
<line x1="641.5" y1="190.5" x2="641.5" y2="199.5" stroke="#f0823f" stroke-width="1"/>
<rect x="640.5" y="193.5" width="2" height="1.5" fill="#6e4633" stroke="#f0823f" stroke-width="1"/>
<line x1="645.5" y1="177.5" x2="645.5" y2="199" stroke="#f0823f" stroke-width="1"/>
<rect x="644.5" y="192.5" width="2" height="2" fill="#ffb98a" stroke="#f0823f" stroke-width="1"/>
<line x1="650.5" y1="183" x2="650.5" y2="205.5" stroke="#f0823f" stroke-width="1"/>
<rect x="649.5" y="191.5" width="2" height="2.5" fill="#6e4633" stroke="#f0823f" stroke-width="1"/>
<line x1="654.5" y1="189" x2="654.5" y2="217.5" stroke="#f0823f" stroke-width="1"/>
<rect x="653.5" y="193.5" width="2" height="16" fill="#6e4633" stroke="#f0823f" stroke-width="1"/>
<line x1="659.5" y1="204.5" x2="659.5" y2="214.5" stroke="#f0823f" stroke-width="1"/>
<rect x="658.5" y="208" width="2" height="1" fill="#ffb98a" stroke="#f0823f" stroke-width="1"/>
<line x1="663.5" y1="202" x2="663.5" y2="214" stroke="#f0823f" stroke-width="1"/>
<rect x="662.5" y="205" width="2" height="0.6" fill="#ffb98a" stroke="#f0823f" stroke-width="1"/>
<line x1="668.5" y1="202" x2="668.5" y2="214" stroke="#f0823f" stroke-width="1"/>
<rect x="667.5" y="204.5" width="2" height="2" fill="#6e4633" stroke="#f0823f" stroke-width="1"/>
<line x1="672.5" y1="196" x2="672.5" y2="217.5" stroke="#f0823f" stroke-width="1"/>
<rect x="671.5" y="206.5" width="2" height="7" fill="#6e4633" stroke="#f0823f" stroke-width="1"/>
<line x1="677.5" y1="209.5" x2="677.5" y2="230" stroke="#f0823f" stroke-width="1"/>
<rect x="676.5" y="214.5" width="2" height="4" fill="#6e4633" stroke="#f0823f" stroke-width="1"/>
<line x1="681.5" y1="209.5" x2="681.5" y2="229" stroke="#f0823f" stroke-width="1"/>
<rect x="680.5" y="216" width="2" height="0.6" fill="#ffb98a" stroke="#f0823f" stroke-width="1"/>
<line x1="686.5" y1="210" x2="686.5" y2="220.5" stroke="#f0823f" stroke-width="1"/>
<rect x="685.5" y="214.5" width="2" height="0.6" fill="#ffb98a" stroke="#f0823f" stroke-width="1"/>
<line x1="690.5" y1="210" x2="690.5" y2="220" stroke="#f0823f" stroke-width="1"/>
<rect x="689.5" y="215" width="2" height="0.6" fill="#6e4633" stroke="#f0823f" stroke-width="1"/>
<line x1="695.5" y1="212" x2="695.5" y2="222.5" stroke="#f0823f" stroke-width="1"/>
<rect x="694.5" y="215.5" width="2" height="1" fill="#6e4633" stroke="#f0823f" stroke-width="1"/>
<line x1="699.5" y1="209.5" x2="699.5" y2="225" stroke="#f0823f" stroke-width="1"/>
<rect x="698.5" y="216.5" width="2" height="2.5" fill="#6e4633" stroke="#f0823f" stroke-width="1"/>
<line x1="704.5" y1="214.5" x2="704.5" y2="235.5" stroke="#f0823f" stroke-width="1"/>
<rect x="703.5" y="219.5" width="2" height="11" fill="#6e4633" stroke="#f0823f" stroke-width="1"/>
<line x1="708.5" y1="214" x2="708.5" y2="250.5" stroke="#f0823f" stroke-width="1"/>
<rect x="707.5" y="216.5" width="2" height="13.5" fill="#ffb98a" stroke="#f0823f" stroke-width="1"/>
<line x1="712.5" y1="214" x2="712.5" y2="227.5" stroke="#f0823f" stroke-width="1"/>
<rect x="711.5" y="215.5" width="2" height="8.5" fill="#6e4633" stroke="#f0823f" stroke-width="1"/>
<line x1="717.5" y1="215" x2="717.5" y2="229" stroke="#f0823f" stroke-width="1"/>
<rect x="716.5" y="221" width="2" height="2.5" fill="#ffb98a" stroke="#f0823f" stroke-width="1"/>
<line x1="721.5" y1="215.5" x2="721.5" y2="225" stroke="#f0823f" stroke-width="1"/>
<rect x="720.5" y="220" width="2" height="2.5" fill="#6e4633" stroke="#f0823f" stroke-width="1"/>
<line x1="726.5" y1="209.5" x2="726.5" y2="229" stroke="#f0823f" stroke-width="1"/>
<rect x="725.5" y="220.5" width="2" height="1.5" fill="#ffb98a" stroke="#f0823f" stroke-width="1"/>
<line x1="730.5" y1="199.5" x2="730.5" y2="230" stroke="#f0823f" stroke-width="1"/>
<rect x="729.5" y="219.5" width="2" height="4" fill="#6e4633" stroke="#f0823f" stroke-width="1"/>
<line x1="735.5" y1="194" x2="735.5" y2="239.5" stroke="#f0823f" stroke-width="1"/>
<rect x="734.5" y="223.5" width="2" height="6.5" fill="#6e4633" stroke="#f0823f" stroke-width="1"/>
<line x1="739.5" y1="225" x2="739.5" y2="236" stroke="#f0823f" stroke-width="1"/>
<rect x="738.5" y="230.5" width="2" height="2" fill="#6e4633" stroke="#f0823f" stroke-width="1"/>
<line x1="744.5" y1="227" x2="744.5" y2="239" stroke="#f0823f" stroke-width="1"/>
<rect x="743.5" y="233" width="2" height="1.5" fill="#6e4633" stroke="#f0823f" stroke-width="1"/>
<line x1="748.5" y1="232.5" x2="748.5" y2="245.5" stroke="#f0823f" stroke-width="1"/>
<rect x="747.5" y="235" width="2" height="5" fill="#6e4633" stroke="#f0823f" stroke-width="1"/>
<line x1="753.5" y1="221" x2="753.5" y2="244.5" stroke="#f0823f" stroke-width="1"/>
<rect x="752.5" y="225.5" width="2" height="14" fill="#ffb98a" stroke="#f0823f" stroke-width="1"/>
<line x1="757.5" y1="206" x2="757.5" y2="229" stroke="#f0823f" stroke-width="1"/>
<rect x="756.5" y="210.5" width="2" height="13" fill="#ffb98a" stroke="#f0823f" stroke-width="1"/>
<line x1="762.5" y1="185.5" x2="762.5" y2="214" stroke="#f0823f" stroke-width="1"/>
<rect x="761.5" y="195.5" width="2" height="12" fill="#ffb98a" stroke="#f0823f" stroke-width="1"/>
<line x1="766.5" y1="191" x2="766.5" y2="208" stroke="#f0823f" stroke-width="1"/>
<rect x="765.5" y="194.5" width="2" height="12" fill="#6e4633" stroke="#f0823f" stroke-width="1"/>
<line x1="771.5" y1="195" x2="771.5" y2="207" stroke="#f0823f" stroke-width="1"/>
<rect x="770.5" y="198.5" width="2" height="5.5" fill="#ffb98a" stroke="#f0823f" stroke-width="1"/>
<line x1="775.5" y1="194" x2="775.5" y2="204" stroke="#f0823f" stroke-width="1"/>
<rect x="774.5" y="197.5" width="2" height="1.5" fill="#6e4633" stroke="#f0823f" stroke-width="1"/>
<line x1="780.5" y1="185.5" x2="780.5" y2="204" stroke="#f0823f" stroke-width="1"/>
<rect x="779.5" y="196.5" width="2" height="2" fill="#ffb98a" stroke="#f0823f" stroke-width="1"/>
<line x1="784.5" y1="191" x2="784.5" y2="207" stroke="#f0823f" stroke-width="1"/>
<rect x="783.5" y="195.5" width="2" height="2" fill="#6e4633" stroke="#f0823f" stroke-width="1"/>
<line x1="788.5" y1="188" x2="788.5" y2="205" stroke="#f0823f" stroke-width="1"/>
<rect x="787.5" y="194" width="2" height="3" fill="#ffb98a" stroke="#f0823f" stroke-width="1"/>
<line x1="793.5" y1="184" x2="793.5" y2="196" stroke="#f0823f" stroke-width="1"/>
<rect x="792.5" y="191" width="2" height="0.6" fill="#ffb98a" stroke="#f0823f" stroke-width="1"/>
<line x1="797.5" y1="185" x2="797.5" y2="197" stroke="#f0823f" stroke-width="1"/>
<rect x="796.5" y="190.5" width="2" height="2" fill="#6e4633" stroke="#f0823f" stroke-width="1"/>
<line x1="802.5" y1="184" x2="802.5" y2="197.5" stroke="#f0823f" stroke-width="1"/>
<rect x="801.5" y="192.5" width="2" height="1.5" fill="#6e4633" stroke="#f0823f" stroke-width="1"/>
<line x1="806.5" y1="189.5" x2="806.5" y2="219" stroke="#f0823f" stroke-width="1"/>
<rect x="805.5" y="193.5" width="2" height="15" fill="#6e4633" stroke="#f0823f" stroke-width="1"/>
<line x1="811.5" y1="179.5" x2="811.5" y2="208" stroke="#f0823f" stroke-width="1"/>
<rect x="810.5" y="189.5" width="2" height="17" fill="#ffb98a" stroke="#f0823f" stroke-width="1"/>
<line x1="815.5" y1="184" x2="815.5" y2="206" stroke="#f0823f" stroke-width="1"/>
<rect x="814.5" y="188.5" width="2" height="9" fill="#6e4633" stroke="#f0823f" stroke-width="1"/>
<line x1="820.5" y1="195" x2="820.5" y2="208" stroke="#f0823f" stroke-width="1"/>
<rect x="819.5" y="197.5" width="2" height="4" fill="#6e4633" stroke="#f0823f" stroke-width="1"/>
<line x1="824.5" y1="194.5" x2="824.5" y2="208" stroke="#f0823f" stroke-width="1"/>
<rect x="823.5" y="201" width="2" height="0.6" fill="#ffb98a" stroke="#f0823f" stroke-width="1"/>
<line x1="829.5" y1="193" x2="829.5" y2="204" stroke="#f0823f" stroke-width="1"/>
<rect x="828.5" y="200.5" width="2" height="0.6" fill="#6e4633" stroke="#f0823f" stroke-width="1"/>
<line x1="833.5" y1="193" x2="833.5" y2="209" stroke="#f0823f" stroke-width="1"/>
<rect x="832.5" y="199.5" width="2" height="1" fill="#ffb98a" stroke="#f0823f" stroke-width="1"/>
<line x1="838.5" y1="188" x2="838.5" y2="205" stroke="#f0823f" stroke-width="1"/>
<rect x="837.5" y="192.5" width="2" height="7" fill="#ffb98a" stroke="#f0823f" stroke-width="1"/>
<line x1="842.5" y1="185.5" x2="842.5" y2="201" stroke="#f0823f" stroke-width="1"/>
<rect x="841.5" y="191.5" width="2" height="6" fill="#6e4633" stroke="#f0823f" stroke-width="1"/>
<line x1="847.5" y1="111" x2="847.5" y2="197.5" stroke="#f0823f" stroke-width="1"/>
<rect x="846.5" y="117.5" width="2" height="77" fill="#ffb98a" stroke="#f0823f" stroke-width="1"/>
<line x1="851.5" y1="108" x2="851.5" y2="120.5" stroke="#f0823f" stroke-width="1"/>
<rect x="850.5" y="111.5" width="2" height="2" fill="#ffb98a" stroke="#f0823f" stroke-width="1"/>
<line x1="856.5" y1="109.5" x2="856.5" y2="127" stroke="#f0823f" stroke-width="1"/>
<rect x="855.5" y="111" width="2" height="4" fill="#6e4633" stroke="#f0823f" stroke-width="1"/>
<polyline points="16,71.25 56,71.25 61,73 66,75.6 72.5,78 79,81 85,83 90,85.6 97.5,93 105,97.5 112.5,103.75 120,108 127.5,112 135,116.25 142.5,119.4 151,121.25 155,123 165,125 180,125 190,123 200,124 212.5,125.5 225,129 237.5,132.5 250,138 260,139 264,140 276.5,147.5 289,154 301.5,155.5 314,157 326.5,158 339,163 351.5,167.5 364,171 376.5,174.5 389,177.5 401.5,182 414,186 426.5,190.5 439,193 451.5,195 464,195 476.5,197 489,196 501.5,195 514,195 526.5,195.5 539,195.5 552,197 565,197.5 590,197.5 597.5,195.5 607.5,192 617.5,189 627.5,189.5 640,190 652.5,191 665,193 677.5,195 690,197 702.5,199 715,200.5 727.5,202.5 740,205.5 750,209 757.5,209 765,207.5 777.5,207 790,206 802.5,204.5 815,204.5 835,203 842.5,202.5 847.5,198 856,194.5" fill="none" stroke="#c42a2c" stroke-width="1.6" stroke-linejoin="round"/>
<polyline points="16,81.25 24,80.6 29,79.4 33,78.75 41,78.5 46,76.9 52,77.25 56,79.4 60,82.5 66,86.5 72.5,90.6 79,95 85,100 90,105 95,115 100,121.25 107,130 117,141 127,149 137,154 145,156 155,155 165,154 172,149 180,144 190,139 197,137 210,137 217,141 225,145 237,151 250,156 262,157.5 264,158 276.5,167.5 289,178 296.5,181 309,179.5 318,174.5 326.5,174.5 339,182.5 351.5,189 364,193 376.5,195 389,199.5 401.5,205 414,209.5 426.5,214.5 439,215 451.5,214 464,210 469,208 476.5,210 484,208 494,204 504,200.5 514,199.5 519,198 539,199 546.5,199.5 550,201 560,203 567.5,200 577.5,200 590,200.5 597.5,196 607.5,187.5 615,183 620,180.5 625,181 640,186 650,187.5 660,191 670,194.5 680,199 690,202 702.5,207 715,210 727.5,213 740,217.5 750,220.5 755,220.5 760,218 772.5,212.5 785,209 797.5,205.5 810,204 822.5,202.5 835,202 842.5,201 847.5,192.5 856,180.5" fill="none" stroke="#0a0ac4" stroke-width="1.15" stroke-linejoin="round"/>
<rect x="16" y="116.8" width="877" height="1" fill="#d6d8da" opacity="0.9"/>
<rect x="16" y="121.7" width="877" height="2.4" fill="#1db81d" opacity="0.88"/>
</g>
<line x1="19.5" y1="288.5" x2="19.5" y2="285.051" stroke="#c2222c" stroke-width="1.4"/>
<line x1="24.5" y1="288.5" x2="24.5" y2="285.125" stroke="#c2222c" stroke-width="1.4"/>
<line x1="28.5" y1="288.5" x2="28.5" y2="285.184" stroke="#c2222c" stroke-width="1.4"/>
<line x1="33.5" y1="288.5" x2="33.5" y2="285.257" stroke="#c2222c" stroke-width="1.4"/>
<line x1="37.5" y1="288.5" x2="37.5" y2="285.316" stroke="#c2222c" stroke-width="1.4"/>
<line x1="42.5" y1="288.5" x2="42.5" y2="285.39" stroke="#c2222c" stroke-width="1.4"/>
<line x1="46.5" y1="288.5" x2="46.5" y2="285.449" stroke="#c2222c" stroke-width="1.4"/>
<line x1="51.5" y1="288.5" x2="51.5" y2="286.1" stroke="#c2222c" stroke-width="1.4"/>
<line x1="55.5" y1="288.5" x2="55.5" y2="287.6" stroke="#c2222c" stroke-width="1.4"/>
<line x1="60.5" y1="288.5" x2="60.5" y2="289.1" stroke="#c2222c" stroke-width="1.4"/>
<line x1="64.5" y1="288.5" x2="64.5" y2="289.4" stroke="#c2222c" stroke-width="1.4"/>
<line x1="69.5" y1="288.5" x2="69.5" y2="290.175" stroke="#c2222c" stroke-width="1.4"/>
<line x1="73.5" y1="288.5" x2="73.5" y2="290.775" stroke="#c2222c" stroke-width="1.4"/>
<line x1="78.5" y1="288.5" x2="78.5" y2="291.525" stroke="#c2222c" stroke-width="1.4"/>
<line x1="82.5" y1="288.5" x2="82.5" y2="292.125" stroke="#c2222c" stroke-width="1.4"/>
<line x1="87.5" y1="288.5" x2="87.5" y2="293.25" stroke="#c2222c" stroke-width="1.4"/>
<line x1="91.5" y1="288.5" x2="91.5" y2="294.45" stroke="#c2222c" stroke-width="1.4"/>
<line x1="95.5" y1="288.5" x2="95.5" y2="295.6" stroke="#c2222c" stroke-width="1.4"/>
<line x1="100.5" y1="288.5" x2="100.5" y2="296.6" stroke="#c2222c" stroke-width="1.4"/>
<line x1="104.5" y1="288.5" x2="104.5" y2="297.3" stroke="#c2222c" stroke-width="1.4"/>
<line x1="109.5" y1="288.5" x2="109.5" y2="298.05" stroke="#c2222c" stroke-width="1.4"/>
<line x1="113.5" y1="288.5" x2="113.5" y2="298.462" stroke="#c2222c" stroke-width="1.4"/>
<line x1="118.5" y1="288.5" x2="118.5" y2="298.269" stroke="#c2222c" stroke-width="1.4"/>
<line x1="122.5" y1="288.5" x2="122.5" y2="297.156" stroke="#c2222c" stroke-width="1.4"/>
<line x1="127.5" y1="288.5" x2="127.5" y2="295.406" stroke="#c2222c" stroke-width="1.4"/>
<line x1="131.5" y1="288.5" x2="131.5" y2="294.614" stroke="#c2222c" stroke-width="1.4"/>
<line x1="136.5" y1="288.5" x2="136.5" y2="293.25" stroke="#c2222c" stroke-width="1.4"/>
<line x1="140.5" y1="288.5" x2="140.5" y2="292.139" stroke="#c2222c" stroke-width="1.4"/>
<line x1="145.5" y1="288.5" x2="145.5" y2="289.88" stroke="#c2222c" stroke-width="1.4"/>
<line x1="149.5" y1="288.5" x2="149.5" y2="288.92" stroke="#c2222c" stroke-width="1.4"/>
<line x1="154.5" y1="288.5" x2="154.5" y2="287.121" stroke="#c2222c" stroke-width="1.4"/>
<line x1="158.5" y1="288.5" x2="158.5" y2="285.735" stroke="#c2222c" stroke-width="1.4"/>
<line x1="163.5" y1="288.5" x2="163.5" y2="285.009" stroke="#c2222c" stroke-width="1.4"/>
<line x1="167.5" y1="288.5" x2="167.5" y2="284.262" stroke="#c2222c" stroke-width="1.4"/>
<line x1="171.5" y1="288.5" x2="171.5" y2="282.392" stroke="#c2222c" stroke-width="1.4"/>
<line x1="176.5" y1="288.5" x2="176.5" y2="280.308" stroke="#c2222c" stroke-width="1.4"/>
<line x1="180.5" y1="288.5" x2="180.5" y2="280.1" stroke="#c2222c" stroke-width="1.4"/>
<line x1="185.5" y1="288.5" x2="185.5" y2="280.1" stroke="#c2222c" stroke-width="1.4"/>
<line x1="189.5" y1="288.5" x2="189.5" y2="280.133" stroke="#c2222c" stroke-width="1.4"/>
<line x1="194.5" y1="288.5" x2="194.5" y2="280.467" stroke="#c2222c" stroke-width="1.4"/>
<line x1="198.5" y1="288.5" x2="198.5" y2="281.812" stroke="#c2222c" stroke-width="1.4"/>
<line x1="203.5" y1="288.5" x2="203.5" y2="282.225" stroke="#c2222c" stroke-width="1.4"/>
<line x1="207.5" y1="288.5" x2="207.5" y2="282.561" stroke="#c2222c" stroke-width="1.4"/>
<line x1="212.5" y1="288.5" x2="212.5" y2="284.17" stroke="#c2222c" stroke-width="1.4"/>
<line x1="216.5" y1="288.5" x2="216.5" y2="285.574" stroke="#c2222c" stroke-width="1.4"/>
<line x1="221.5" y1="288.5" x2="221.5" y2="288" stroke="#c2222c" stroke-width="1.4"/>
<line x1="225.5" y1="288.5" x2="225.5" y2="289.1" stroke="#c2222c" stroke-width="1.4"/>
<line x1="230.5" y1="288.5" x2="230.5" y2="289.1" stroke="#c2222c" stroke-width="1.4"/>
<line x1="234.5" y1="288.5" x2="234.5" y2="289.1" stroke="#c2222c" stroke-width="1.4"/>
<line x1="239.5" y1="288.5" x2="239.5" y2="289.1" stroke="#c2222c" stroke-width="1.4"/>
<line x1="243.5" y1="288.5" x2="243.5" y2="289.1" stroke="#c2222c" stroke-width="1.4"/>
<line x1="247.5" y1="288.5" x2="247.5" y2="289.1" stroke="#c2222c" stroke-width="1.4"/>
<line x1="252.5" y1="288.5" x2="252.5" y2="289.1" stroke="#c2222c" stroke-width="1.4"/>
<line x1="256.5" y1="288.5" x2="256.5" y2="289.1" stroke="#c2222c" stroke-width="1.4"/>
<line x1="261.5" y1="288.5" x2="261.5" y2="289.1" stroke="#c2222c" stroke-width="1.4"/>
<line x1="265.5" y1="288.5" x2="265.5" y2="289.113" stroke="#c2222c" stroke-width="1.4"/>
<line x1="270.5" y1="288.5" x2="270.5" y2="291.467" stroke="#c2222c" stroke-width="1.4"/>
<line x1="274.5" y1="288.5" x2="274.5" y2="292" stroke="#c2222c" stroke-width="1.4"/>
<line x1="279.5" y1="288.5" x2="279.5" y2="292.635" stroke="#c2222c" stroke-width="1.4"/>
<line x1="283.5" y1="288.5" x2="283.5" y2="292.911" stroke="#c2222c" stroke-width="1.4"/>
<line x1="288.5" y1="288.5" x2="288.5" y2="293.235" stroke="#c2222c" stroke-width="1.4"/>
<line x1="292.5" y1="288.5" x2="292.5" y2="292.637" stroke="#c2222c" stroke-width="1.4"/>
<line x1="297.5" y1="288.5" x2="297.5" y2="291.1" stroke="#c2222c" stroke-width="1.4"/>
<line x1="301.5" y1="288.5" x2="301.5" y2="288.9" stroke="#c2222c" stroke-width="1.4"/>
<line x1="306.5" y1="288.5" x2="306.5" y2="287.84" stroke="#c2222c" stroke-width="1.4"/>
<line x1="310.5" y1="288.5" x2="310.5" y2="286.56" stroke="#c2222c" stroke-width="1.4"/>
<line x1="315.5" y1="288.5" x2="315.5" y2="284.425" stroke="#c2222c" stroke-width="1.4"/>
<line x1="319.5" y1="288.5" x2="319.5" y2="283.975" stroke="#c2222c" stroke-width="1.4"/>
<line x1="323.5" y1="288.5" x2="323.5" y2="284.55" stroke="#c2222c" stroke-width="1.4"/>
<line x1="328.5" y1="288.5" x2="328.5" y2="285.05" stroke="#c2222c" stroke-width="1.4"/>
<line x1="332.5" y1="288.5" x2="332.5" y2="286.762" stroke="#c2222c" stroke-width="1.4"/>
<line x1="337.5" y1="288.5" x2="337.5" y2="289.1" stroke="#c2222c" stroke-width="1.4"/>
<line x1="341.5" y1="288.5" x2="341.5" y2="289.1" stroke="#c2222c" stroke-width="1.4"/>
<line x1="346.5" y1="288.5" x2="346.5" y2="289.1" stroke="#c2222c" stroke-width="1.4"/>
<line x1="350.5" y1="288.5" x2="350.5" y2="289.1" stroke="#c2222c" stroke-width="1.4"/>
<line x1="355.5" y1="288.5" x2="355.5" y2="289.1" stroke="#c2222c" stroke-width="1.4"/>
<line x1="359.5" y1="288.5" x2="359.5" y2="289.1" stroke="#c2222c" stroke-width="1.4"/>
<line x1="364.5" y1="288.5" x2="364.5" y2="289.1" stroke="#c2222c" stroke-width="1.4"/>
<line x1="368.5" y1="288.5" x2="368.5" y2="289.1" stroke="#c2222c" stroke-width="1.4"/>
<line x1="373.5" y1="288.5" x2="373.5" y2="289.1" stroke="#c2222c" stroke-width="1.4"/>
<line x1="377.5" y1="288.5" x2="377.5" y2="289.1" stroke="#c2222c" stroke-width="1.4"/>
<line x1="382.5" y1="288.5" x2="382.5" y2="289.1" stroke="#c2222c" stroke-width="1.4"/>
<line x1="386.5" y1="288.5" x2="386.5" y2="289.1" stroke="#c2222c" stroke-width="1.4"/>
<line x1="391.5" y1="288.5" x2="391.5" y2="289.1" stroke="#c2222c" stroke-width="1.4"/>
<line x1="395.5" y1="288.5" x2="395.5" y2="289.1" stroke="#c2222c" stroke-width="1.4"/>
<line x1="399.5" y1="288.5" x2="399.5" y2="289.1" stroke="#c2222c" stroke-width="1.4"/>
<line x1="404.5" y1="288.5" x2="404.5" y2="289.1" stroke="#c2222c" stroke-width="1.4"/>
<line x1="408.5" y1="288.5" x2="408.5" y2="289.1" stroke="#c2222c" stroke-width="1.4"/>
<line x1="413.5" y1="288.5" x2="413.5" y2="289.1" stroke="#c2222c" stroke-width="1.4"/>
<line x1="417.5" y1="288.5" x2="417.5" y2="289.1" stroke="#c2222c" stroke-width="1.4"/>
<line x1="422.5" y1="288.5" x2="422.5" y2="289.1" stroke="#c2222c" stroke-width="1.4"/>
<line x1="426.5" y1="288.5" x2="426.5" y2="289.1" stroke="#c2222c" stroke-width="1.4"/>
<line x1="431.5" y1="288.5" x2="431.5" y2="289.1" stroke="#c2222c" stroke-width="1.4"/>
<line x1="435.5" y1="288.5" x2="435.5" y2="289.1" stroke="#c2222c" stroke-width="1.4"/>
<line x1="440.5" y1="288.5" x2="440.5" y2="289.1" stroke="#c2222c" stroke-width="1.4"/>
<line x1="444.5" y1="288.5" x2="444.5" y2="287.75" stroke="#c2222c" stroke-width="1.4"/>
<line x1="449.5" y1="288.5" x2="449.5" y2="286.625" stroke="#c2222c" stroke-width="1.4"/>
<line x1="453.5" y1="288.5" x2="453.5" y2="285.681" stroke="#c2222c" stroke-width="1.4"/>
<line x1="458.5" y1="288.5" x2="458.5" y2="284.619" stroke="#c2222c" stroke-width="1.4"/>
<line x1="462.5" y1="288.5" x2="462.5" y2="284.286" stroke="#c2222c" stroke-width="1.4"/>
<line x1="467.5" y1="288.5" x2="467.5" y2="284.259" stroke="#c2222c" stroke-width="1.4"/>
<line x1="471.5" y1="288.5" x2="471.5" y2="284.237" stroke="#c2222c" stroke-width="1.4"/>
<line x1="476.5" y1="288.5" x2="476.5" y2="284.21" stroke="#c2222c" stroke-width="1.4"/>
<line x1="480.5" y1="288.5" x2="480.5" y2="284.188" stroke="#c2222c" stroke-width="1.4"/>
<line x1="484.5" y1="288.5" x2="484.5" y2="284.166" stroke="#c2222c" stroke-width="1.4"/>
<line x1="489.5" y1="288.5" x2="489.5" y2="284.139" stroke="#c2222c" stroke-width="1.4"/>
<line x1="493.5" y1="288.5" x2="493.5" y2="284.117" stroke="#c2222c" stroke-width="1.4"/>
<line x1="498.5" y1="288.5" x2="498.5" y2="284.09" stroke="#c2222c" stroke-width="1.4"/>
<line x1="502.5" y1="288.5" x2="502.5" y2="284.068" stroke="#c2222c" stroke-width="1.4"/>
<line x1="507.5" y1="288.5" x2="507.5" y2="284.041" stroke="#c2222c" stroke-width="1.4"/>
<line x1="511.5" y1="288.5" x2="511.5" y2="284.019" stroke="#c2222c" stroke-width="1.4"/>
<line x1="516.5" y1="288.5" x2="516.5" y2="284.257" stroke="#c2222c" stroke-width="1.4"/>
<line x1="520.5" y1="288.5" x2="520.5" y2="284.943" stroke="#c2222c" stroke-width="1.4"/>
<line x1="525.5" y1="288.5" x2="525.5" y2="285.988" stroke="#c2222c" stroke-width="1.4"/>
<line x1="529.5" y1="288.5" x2="529.5" y2="286.887" stroke="#c2222c" stroke-width="1.4"/>
<line x1="534.5" y1="288.5" x2="534.5" y2="287.36" stroke="#c2222c" stroke-width="1.4"/>
<line x1="538.5" y1="288.5" x2="538.5" y2="287.68" stroke="#c2222c" stroke-width="1.4"/>
<line x1="543.5" y1="288.5" x2="543.5" y2="288.08" stroke="#c2222c" stroke-width="1.4"/>
<line x1="547.5" y1="288.5" x2="547.5" y2="288.167" stroke="#c2222c" stroke-width="1.4"/>
<line x1="552.5" y1="288.5" x2="552.5" y2="288.1" stroke="#c2222c" stroke-width="1.4"/>
<line x1="556.5" y1="288.5" x2="556.5" y2="288.047" stroke="#c2222c" stroke-width="1.4"/>
<line x1="560.5" y1="288.5" x2="560.5" y2="288" stroke="#c2222c" stroke-width="1.4"/>
<line x1="565.5" y1="288.5" x2="565.5" y2="288" stroke="#c2222c" stroke-width="1.4"/>
<line x1="569.5" y1="288.5" x2="569.5" y2="288" stroke="#c2222c" stroke-width="1.4"/>
<line x1="574.5" y1="288.5" x2="574.5" y2="288" stroke="#c2222c" stroke-width="1.4"/>
<line x1="578.5" y1="288.5" x2="578.5" y2="288" stroke="#c2222c" stroke-width="1.4"/>
<line x1="583.5" y1="288.5" x2="583.5" y2="288" stroke="#c2222c" stroke-width="1.4"/>
<line x1="587.5" y1="288.5" x2="587.5" y2="287.667" stroke="#c2222c" stroke-width="1.4"/>
<line x1="592.5" y1="288.5" x2="592.5" y2="287" stroke="#c2222c" stroke-width="1.4"/>
<line x1="596.5" y1="288.5" x2="596.5" y2="286.467" stroke="#c2222c" stroke-width="1.4"/>
<line x1="601.5" y1="288.5" x2="601.5" y2="285.775" stroke="#c2222c" stroke-width="1.4"/>
<line x1="605.5" y1="288.5" x2="605.5" y2="285.175" stroke="#c2222c" stroke-width="1.4"/>
<line x1="610.5" y1="288.5" x2="610.5" y2="284.5" stroke="#c2222c" stroke-width="1.4"/>
<line x1="614.5" y1="288.5" x2="614.5" y2="284.5" stroke="#c2222c" stroke-width="1.4"/>
<line x1="619.5" y1="288.5" x2="619.5" y2="284.5" stroke="#c2222c" stroke-width="1.4"/>
<line x1="623.5" y1="288.5" x2="623.5" y2="285.2" stroke="#c2222c" stroke-width="1.4"/>
<line x1="628.5" y1="288.5" x2="628.5" y2="286.2" stroke="#c2222c" stroke-width="1.4"/>
<line x1="632.5" y1="288.5" x2="632.5" y2="287" stroke="#c2222c" stroke-width="1.4"/>
<line x1="636.5" y1="288.5" x2="636.5" y2="287.8" stroke="#c2222c" stroke-width="1.4"/>
<line x1="641.5" y1="288.5" x2="641.5" y2="289.1" stroke="#c2222c" stroke-width="1.4"/>
<line x1="645.5" y1="288.5" x2="645.5" y2="289.1" stroke="#c2222c" stroke-width="1.4"/>
<line x1="650.5" y1="288.5" x2="650.5" y2="289.025" stroke="#c2222c" stroke-width="1.4"/>
<line x1="654.5" y1="288.5" x2="654.5" y2="289.225" stroke="#c2222c" stroke-width="1.4"/>
<line x1="659.5" y1="288.5" x2="659.5" y2="289.475" stroke="#c2222c" stroke-width="1.4"/>
<line x1="663.5" y1="288.5" x2="663.5" y2="289.64" stroke="#c2222c" stroke-width="1.4"/>
<line x1="668.5" y1="288.5" x2="668.5" y2="289.84" stroke="#c2222c" stroke-width="1.4"/>
<line x1="672.5" y1="288.5" x2="672.5" y2="290" stroke="#c2222c" stroke-width="1.4"/>
<line x1="677.5" y1="288.5" x2="677.5" y2="290.2" stroke="#c2222c" stroke-width="1.4"/>
<line x1="681.5" y1="288.5" x2="681.5" y2="290.36" stroke="#c2222c" stroke-width="1.4"/>
<line x1="686.5" y1="288.5" x2="686.5" y2="290.693" stroke="#c2222c" stroke-width="1.4"/>
<line x1="690.5" y1="288.5" x2="690.5" y2="291.207" stroke="#c2222c" stroke-width="1.4"/>
<line x1="695.5" y1="288.5" x2="695.5" y2="291.4" stroke="#c2222c" stroke-width="1.4"/>
<line x1="699.5" y1="288.5" x2="699.5" y2="291.4" stroke="#c2222c" stroke-width="1.4"/>
<line x1="704.5" y1="288.5" x2="704.5" y2="291.4" stroke="#c2222c" stroke-width="1.4"/>
<line x1="708.5" y1="288.5" x2="708.5" y2="291.4" stroke="#c2222c" stroke-width="1.4"/>
<line x1="712.5" y1="288.5" x2="712.5" y2="291.4" stroke="#c2222c" stroke-width="1.4"/>
<line x1="717.5" y1="288.5" x2="717.5" y2="290.95" stroke="#c2222c" stroke-width="1.4"/>
<line x1="721.5" y1="288.5" x2="721.5" y2="290.23" stroke="#c2222c" stroke-width="1.4"/>
<line x1="726.5" y1="288.5" x2="726.5" y2="289.56" stroke="#c2222c" stroke-width="1.4"/>
<line x1="730.5" y1="288.5" x2="730.5" y2="289.453" stroke="#c2222c" stroke-width="1.4"/>
<line x1="735.5" y1="288.5" x2="735.5" y2="289.32" stroke="#c2222c" stroke-width="1.4"/>
<line x1="739.5" y1="288.5" x2="739.5" y2="289.213" stroke="#c2222c" stroke-width="1.4"/>
<line x1="744.5" y1="288.5" x2="744.5" y2="289.043" stroke="#c2222c" stroke-width="1.4"/>
<line x1="748.5" y1="288.5" x2="748.5" y2="288.902" stroke="#c2222c" stroke-width="1.4"/>
<line x1="753.5" y1="288.5" x2="753.5" y2="289.1" stroke="#c2222c" stroke-width="1.4"/>
<line x1="757.5" y1="288.5" x2="757.5" y2="289.1" stroke="#c2222c" stroke-width="1.4"/>
<line x1="762.5" y1="288.5" x2="762.5" y2="287.75" stroke="#c2222c" stroke-width="1.4"/>
<line x1="766.5" y1="288.5" x2="766.5" y2="286.769" stroke="#c2222c" stroke-width="1.4"/>
<line x1="771.5" y1="288.5" x2="771.5" y2="286" stroke="#c2222c" stroke-width="1.4"/>
<line x1="775.5" y1="288.5" x2="775.5" y2="285.385" stroke="#c2222c" stroke-width="1.4"/>
<line x1="780.5" y1="288.5" x2="780.5" y2="284.943" stroke="#c2222c" stroke-width="1.4"/>
<line x1="784.5" y1="288.5" x2="784.5" y2="284.852" stroke="#c2222c" stroke-width="1.4"/>
<line x1="788.5" y1="288.5" x2="788.5" y2="284.761" stroke="#c2222c" stroke-width="1.4"/>
<line x1="793.5" y1="288.5" x2="793.5" y2="284.648" stroke="#c2222c" stroke-width="1.4"/>
<line x1="797.5" y1="288.5" x2="797.5" y2="284.557" stroke="#c2222c" stroke-width="1.4"/>
<line x1="802.5" y1="288.5" x2="802.5" y2="284.5" stroke="#c2222c" stroke-width="1.4"/>
<line x1="806.5" y1="288.5" x2="806.5" y2="284.5" stroke="#c2222c" stroke-width="1.4"/>
<line x1="811.5" y1="288.5" x2="811.5" y2="284.5" stroke="#c2222c" stroke-width="1.4"/>
<line x1="815.5" y1="288.5" x2="815.5" y2="284.5" stroke="#c2222c" stroke-width="1.4"/>
<line x1="820.5" y1="288.5" x2="820.5" y2="284.5" stroke="#c2222c" stroke-width="1.4"/>
<line x1="824.5" y1="288.5" x2="824.5" y2="284.5" stroke="#c2222c" stroke-width="1.4"/>
<line x1="829.5" y1="288.5" x2="829.5" y2="284.5" stroke="#c2222c" stroke-width="1.4"/>
<line x1="833.5" y1="288.5" x2="833.5" y2="284.635" stroke="#c2222c" stroke-width="1.4"/>
<line x1="838.5" y1="288.5" x2="838.5" y2="284.827" stroke="#c2222c" stroke-width="1.4"/>
<line x1="842.5" y1="288.5" x2="842.5" y2="284.981" stroke="#c2222c" stroke-width="1.4"/>
<line x1="847.5" y1="288.5" x2="847.5" y2="284.043" stroke="#c2222c" stroke-width="1.4"/>
<line x1="851.5" y1="288.5" x2="851.5" y2="280.5" stroke="#c2222c" stroke-width="1.4"/>
<line x1="856.5" y1="288.5" x2="856.5" y2="278.591" stroke="#c2222c" stroke-width="1.4"/>
<polyline points="16.5,301 25,298.75 37.5,297 50,295.5 54,295.5 60,298 70,302.5 80,306 87.5,311 95,317.5 105,323.75 115,330 125,332.5 135,333 145,331 155,328 165,324 175,316 185,309.5 195,305 205,303 212.5,303 220,305.5 230,308 240,309.5 250,310.75 260,310 267.5,312 276.5,315.5 289,320 294,320.5 304,316.25 314,311.25 321.5,308.75 331.5,308.75 339,311 351.5,314.25 364,314.25 376.5,313.75 389,313.75 401.5,315.5 414,316.25 426.5,316.25 434,317 444,313 454,310 464,307 476.5,305 484,303 491.5,298.75 501.5,296.25 514,293.75 526.5,293 539,292.5 549,292.5 557.5,294.5 570,293 582.5,291.25 595,288.75 605,283.75 612.5,280 620,278.25 627.5,280 637.5,282.5 647.5,283.75 657.5,287 670,290 682.5,293.75 690,295.1 697.5,295.5 703.75,298.5 712.5,299.25 727.5,299.5 740,301.75 747.5,303.25 753.75,303.25 760,300.5 770,297 777.5,294.75 787.5,291.75 795,290.2 797.7,288.8 808.8,288.1 811,287.3 827,287.1 843.5,286.2 844.6,284 849,278.4 853.3,273.9 855.7,272.5" fill="none" stroke="#0a0a7c" stroke-width="1.4" stroke-linejoin="round"/>
<circle cx="19.5" cy="303.132" r="1.62" fill="#e21c2e"/>
<circle cx="24.5" cy="302.103" r="1.62" fill="#e21c2e"/>
<circle cx="28.5" cy="301.3" r="1.62" fill="#e21c2e"/>
<circle cx="33.5" cy="300.3" r="1.62" fill="#e21c2e"/>
<circle cx="37.5" cy="299.5" r="1.62" fill="#e21c2e"/>
<circle cx="42.5" cy="298.7" r="1.62" fill="#e21c2e"/>
<circle cx="46.5" cy="298.06" r="1.62" fill="#e21c2e"/>
<circle cx="51.5" cy="297.5" r="1.62" fill="#e21c2e"/>
<circle cx="55.5" cy="297.5" r="1.62" fill="#e21c2e"/>
<circle cx="60.5" cy="297.5" r="1.62" fill="#e21c2e"/>
<circle cx="64.5" cy="297.9" r="1.62" fill="#e21c2e"/>
<circle cx="69.5" cy="298.9" r="1.62" fill="#e21c2e"/>
<circle cx="73.5" cy="299.7" r="1.62" fill="#e21c2e"/>
<circle cx="78.5" cy="301.12" r="1.62" fill="#e21c2e"/>
<circle cx="82.5" cy="302.4" r="1.62" fill="#e21c2e"/>
<circle cx="87.5" cy="304" r="1.62" fill="#e21c2e"/>
<circle cx="91.5" cy="305.92" r="1.62" fill="#e21c2e"/>
<circle cx="95.5" cy="307.84" r="1.62" fill="#e21c2e"/>
<circle cx="100.5" cy="310.28" r="1.62" fill="#e21c2e"/>
<circle cx="104.5" cy="312.52" r="1.62" fill="#e21c2e"/>
<circle cx="109.5" cy="315.32" r="1.62" fill="#e21c2e"/>
<circle cx="113.5" cy="317.48" r="1.62" fill="#e21c2e"/>
<circle cx="118.5" cy="319.88" r="1.62" fill="#e21c2e"/>
<circle cx="122.5" cy="321.8" r="1.62" fill="#e21c2e"/>
<circle cx="127.5" cy="324" r="1.62" fill="#e21c2e"/>
<circle cx="131.5" cy="325.6" r="1.62" fill="#e21c2e"/>
<circle cx="136.5" cy="327.262" r="1.62" fill="#e21c2e"/>
<circle cx="140.5" cy="327.962" r="1.62" fill="#e21c2e"/>
<circle cx="145.5" cy="328.712" r="1.62" fill="#e21c2e"/>
<circle cx="149.5" cy="328.413" r="1.62" fill="#e21c2e"/>
<circle cx="154.5" cy="328.038" r="1.62" fill="#e21c2e"/>
<circle cx="158.5" cy="327.3" r="1.62" fill="#e21c2e"/>
<circle cx="163.5" cy="326.3" r="1.62" fill="#e21c2e"/>
<circle cx="167.5" cy="325.25" r="1.62" fill="#e21c2e"/>
<circle cx="171.5" cy="324.05" r="1.62" fill="#e21c2e"/>
<circle cx="176.5" cy="322.175" r="1.62" fill="#e21c2e"/>
<circle cx="180.5" cy="319.975" r="1.62" fill="#e21c2e"/>
<circle cx="185.5" cy="317.275" r="1.62" fill="#e21c2e"/>
<circle cx="189.5" cy="315.475" r="1.62" fill="#e21c2e"/>
<circle cx="194.5" cy="313.225" r="1.62" fill="#e21c2e"/>
<circle cx="198.5" cy="311.775" r="1.62" fill="#e21c2e"/>
<circle cx="203.5" cy="310.025" r="1.62" fill="#e21c2e"/>
<circle cx="207.5" cy="308.875" r="1.62" fill="#e21c2e"/>
<circle cx="212.5" cy="307.625" r="1.62" fill="#e21c2e"/>
<circle cx="216.5" cy="306.85" r="1.62" fill="#e21c2e"/>
<circle cx="221.5" cy="306.35" r="1.62" fill="#e21c2e"/>
<circle cx="225.5" cy="306.04" r="1.62" fill="#e21c2e"/>
<circle cx="230.5" cy="306.44" r="1.62" fill="#e21c2e"/>
<circle cx="234.5" cy="306.76" r="1.62" fill="#e21c2e"/>
<circle cx="239.5" cy="307.16" r="1.62" fill="#e21c2e"/>
<circle cx="243.5" cy="307.48" r="1.62" fill="#e21c2e"/>
<circle cx="247.5" cy="307.8" r="1.62" fill="#e21c2e"/>
<circle cx="252.5" cy="308.2" r="1.62" fill="#e21c2e"/>
<circle cx="256.5" cy="308.52" r="1.62" fill="#e21c2e"/>
<circle cx="261.5" cy="308.92" r="1.62" fill="#e21c2e"/>
<circle cx="265.5" cy="309.482" r="1.62" fill="#e21c2e"/>
<circle cx="270.5" cy="310.286" r="1.62" fill="#e21c2e"/>
<circle cx="274.5" cy="310.929" r="1.62" fill="#e21c2e"/>
<circle cx="279.5" cy="311.85" r="1.62" fill="#e21c2e"/>
<circle cx="283.5" cy="312.65" r="1.62" fill="#e21c2e"/>
<circle cx="288.5" cy="313.65" r="1.62" fill="#e21c2e"/>
<circle cx="292.5" cy="314.45" r="1.62" fill="#e21c2e"/>
<circle cx="297.5" cy="315.45" r="1.62" fill="#e21c2e"/>
<circle cx="301.5" cy="315.688" r="1.62" fill="#e21c2e"/>
<circle cx="306.5" cy="315.562" r="1.62" fill="#e21c2e"/>
<circle cx="310.5" cy="315.125" r="1.62" fill="#e21c2e"/>
<circle cx="315.5" cy="313.875" r="1.62" fill="#e21c2e"/>
<circle cx="319.5" cy="312.9" r="1.62" fill="#e21c2e"/>
<circle cx="323.5" cy="312.1" r="1.62" fill="#e21c2e"/>
<circle cx="328.5" cy="311.1" r="1.62" fill="#e21c2e"/>
<circle cx="332.5" cy="310.5" r="1.62" fill="#e21c2e"/>
<circle cx="337.5" cy="310.5" r="1.62" fill="#e21c2e"/>
<circle cx="341.5" cy="310.5" r="1.62" fill="#e21c2e"/>
<circle cx="346.5" cy="310.65" r="1.62" fill="#e21c2e"/>
<circle cx="350.5" cy="310.89" r="1.62" fill="#e21c2e"/>
<circle cx="355.5" cy="311.19" r="1.62" fill="#e21c2e"/>
<circle cx="359.5" cy="311.43" r="1.62" fill="#e21c2e"/>
<circle cx="364.5" cy="311.73" r="1.62" fill="#e21c2e"/>
<circle cx="368.5" cy="311.97" r="1.62" fill="#e21c2e"/>
<circle cx="373.5" cy="312" r="1.62" fill="#e21c2e"/>
<circle cx="377.5" cy="312" r="1.62" fill="#e21c2e"/>
<circle cx="382.5" cy="312" r="1.62" fill="#e21c2e"/>
<circle cx="386.5" cy="312" r="1.62" fill="#e21c2e"/>
<circle cx="391.5" cy="312.25" r="1.62" fill="#e21c2e"/>
<circle cx="395.5" cy="312.65" r="1.62" fill="#e21c2e"/>
<circle cx="399.5" cy="313.05" r="1.62" fill="#e21c2e"/>
<circle cx="404.5" cy="313.49" r="1.62" fill="#e21c2e"/>
<circle cx="408.5" cy="313.81" r="1.62" fill="#e21c2e"/>
<circle cx="413.5" cy="314.21" r="1.62" fill="#e21c2e"/>
<circle cx="417.5" cy="314.32" r="1.62" fill="#e21c2e"/>
<circle cx="422.5" cy="314.42" r="1.62" fill="#e21c2e"/>
<circle cx="426.5" cy="314.5" r="1.62" fill="#e21c2e"/>
<circle cx="431.5" cy="315" r="1.62" fill="#e21c2e"/>
<circle cx="435.5" cy="315.4" r="1.62" fill="#e21c2e"/>
<circle cx="440.5" cy="314.8" r="1.62" fill="#e21c2e"/>
<circle cx="444.5" cy="314.1" r="1.62" fill="#e21c2e"/>
<circle cx="449.5" cy="313.15" r="1.62" fill="#e21c2e"/>
<circle cx="453.5" cy="312.35" r="1.62" fill="#e21c2e"/>
<circle cx="458.5" cy="311.35" r="1.62" fill="#e21c2e"/>
<circle cx="462.5" cy="310.55" r="1.62" fill="#e21c2e"/>
<circle cx="467.5" cy="309.55" r="1.62" fill="#e21c2e"/>
<circle cx="471.5" cy="308.75" r="1.62" fill="#e21c2e"/>
<circle cx="476.5" cy="307.75" r="1.62" fill="#e21c2e"/>
<circle cx="480.5" cy="306.95" r="1.62" fill="#e21c2e"/>
<circle cx="484.5" cy="306.1" r="1.62" fill="#e21c2e"/>
<circle cx="489.5" cy="304.6" r="1.62" fill="#e21c2e"/>
<circle cx="493.5" cy="303.4" r="1.62" fill="#e21c2e"/>
<circle cx="498.5" cy="301.788" r="1.62" fill="#e21c2e"/>
<circle cx="502.5" cy="300.488" r="1.62" fill="#e21c2e"/>
<circle cx="507.5" cy="299.125" r="1.62" fill="#e21c2e"/>
<circle cx="511.5" cy="298.125" r="1.62" fill="#e21c2e"/>
<circle cx="516.5" cy="297" r="1.62" fill="#e21c2e"/>
<circle cx="520.5" cy="296.2" r="1.62" fill="#e21c2e"/>
<circle cx="525.5" cy="295.2" r="1.62" fill="#e21c2e"/>
<circle cx="529.5" cy="294.7" r="1.62" fill="#e21c2e"/>
<circle cx="534.5" cy="294.2" r="1.62" fill="#e21c2e"/>
<circle cx="538.5" cy="293.8" r="1.62" fill="#e21c2e"/>
<circle cx="543.5" cy="293.49" r="1.62" fill="#e21c2e"/>
<circle cx="547.5" cy="293.26" r="1.62" fill="#e21c2e"/>
<circle cx="552.5" cy="293" r="1.62" fill="#e21c2e"/>
<circle cx="556.5" cy="293" r="1.62" fill="#e21c2e"/>
<circle cx="560.5" cy="293" r="1.62" fill="#e21c2e"/>
<circle cx="565.5" cy="293" r="1.62" fill="#e21c2e"/>
<circle cx="569.5" cy="293" r="1.62" fill="#e21c2e"/>
<circle cx="574.5" cy="292.64" r="1.62" fill="#e21c2e"/>
<circle cx="578.5" cy="292.32" r="1.62" fill="#e21c2e"/>
<circle cx="583.5" cy="291.88" r="1.62" fill="#e21c2e"/>
<circle cx="587.5" cy="291.4" r="1.62" fill="#e21c2e"/>
<circle cx="592.5" cy="290.8" r="1.62" fill="#e21c2e"/>
<circle cx="596.5" cy="290.125" r="1.62" fill="#e21c2e"/>
<circle cx="601.5" cy="288.875" r="1.62" fill="#e21c2e"/>
<circle cx="605.5" cy="287.875" r="1.62" fill="#e21c2e"/>
<circle cx="610.5" cy="286.625" r="1.62" fill="#e21c2e"/>
<circle cx="614.5" cy="285.625" r="1.62" fill="#e21c2e"/>
<circle cx="619.5" cy="283.7" r="1.62" fill="#e21c2e"/>
<circle cx="623.5" cy="282.333" r="1.62" fill="#e21c2e"/>
<circle cx="628.5" cy="281.5" r="1.62" fill="#e21c2e"/>
<circle cx="632.5" cy="281.25" r="1.62" fill="#e21c2e"/>
<circle cx="636.5" cy="281.25" r="1.62" fill="#e21c2e"/>
<circle cx="641.5" cy="281.438" r="1.62" fill="#e21c2e"/>
<circle cx="645.5" cy="281.938" r="1.62" fill="#e21c2e"/>
<circle cx="650.5" cy="282.6" r="1.62" fill="#e21c2e"/>
<circle cx="654.5" cy="283.4" r="1.62" fill="#e21c2e"/>
<circle cx="659.5" cy="284.4" r="1.62" fill="#e21c2e"/>
<circle cx="663.5" cy="285.375" r="1.62" fill="#e21c2e"/>
<circle cx="668.5" cy="286.625" r="1.62" fill="#e21c2e"/>
<circle cx="672.5" cy="287.35" r="1.62" fill="#e21c2e"/>
<circle cx="677.5" cy="288.05" r="1.62" fill="#e21c2e"/>
<circle cx="681.5" cy="288.61" r="1.62" fill="#e21c2e"/>
<circle cx="686.5" cy="289.47" r="1.62" fill="#e21c2e"/>
<circle cx="690.5" cy="290.23" r="1.62" fill="#e21c2e"/>
<circle cx="695.5" cy="291.485" r="1.62" fill="#e21c2e"/>
<circle cx="699.5" cy="292.165" r="1.62" fill="#e21c2e"/>
<circle cx="704.5" cy="293.15" r="1.62" fill="#e21c2e"/>
<circle cx="708.5" cy="293.797" r="1.62" fill="#e21c2e"/>
<circle cx="712.5" cy="294.422" r="1.62" fill="#e21c2e"/>
<circle cx="717.5" cy="295.5" r="1.62" fill="#e21c2e"/>
<circle cx="721.5" cy="296.3" r="1.62" fill="#e21c2e"/>
<circle cx="726.5" cy="297" r="1.62" fill="#e21c2e"/>
<circle cx="730.5" cy="297.533" r="1.62" fill="#e21c2e"/>
<circle cx="735.5" cy="298.05" r="1.62" fill="#e21c2e"/>
<circle cx="739.5" cy="298.45" r="1.62" fill="#e21c2e"/>
<circle cx="744.5" cy="298.875" r="1.62" fill="#e21c2e"/>
<circle cx="748.5" cy="299.208" r="1.62" fill="#e21c2e"/>
<circle cx="753.5" cy="300.375" r="1.62" fill="#e21c2e"/>
<circle cx="757.5" cy="300.5" r="1.62" fill="#e21c2e"/>
<circle cx="762.5" cy="300.14" r="1.62" fill="#e21c2e"/>
<circle cx="766.5" cy="299.575" r="1.62" fill="#e21c2e"/>
<circle cx="771.5" cy="298.86" r="1.62" fill="#e21c2e"/>
<circle cx="775.5" cy="298.54" r="1.62" fill="#e21c2e"/>
<circle cx="780.5" cy="297.51" r="1.62" fill="#e21c2e"/>
<circle cx="784.5" cy="296.525" r="1.62" fill="#e21c2e"/>
<circle cx="788.5" cy="295.525" r="1.62" fill="#e21c2e"/>
<circle cx="793.5" cy="294.7" r="1.62" fill="#e21c2e"/>
<circle cx="797.5" cy="292.748" r="1.62" fill="#e21c2e"/>
<circle cx="802.5" cy="291.699" r="1.62" fill="#e21c2e"/>
<circle cx="806.5" cy="291.6" r="1.62" fill="#e21c2e"/>
<circle cx="811.5" cy="290.23" r="1.62" fill="#e21c2e"/>
<circle cx="815.5" cy="289.55" r="1.62" fill="#e21c2e"/>
<circle cx="820.5" cy="288.777" r="1.62" fill="#e21c2e"/>
<circle cx="824.5" cy="288.7" r="1.62" fill="#e21c2e"/>
<circle cx="829.5" cy="287.168" r="1.62" fill="#e21c2e"/>
<circle cx="833.5" cy="287.1" r="1.62" fill="#e21c2e"/>
<circle cx="838.5" cy="287.1" r="1.62" fill="#e21c2e"/>
<circle cx="842.5" cy="286.663" r="1.62" fill="#e21c2e"/>
<circle cx="847.5" cy="285.451" r="1.62" fill="#e21c2e"/>
<circle cx="851.5" cy="283.4" r="1.62" fill="#e21c2e"/>
<circle cx="856.5" cy="280.855" r="1.62" fill="#e21c2e"/>
<g clip-path="url(#cr)">
<path d="M16.5,366.25 L22.5,370 L28,362.5 L33.75,368.75 L40,370 L46.25,368 L51.25,367 L55,373.75 L60,378 L70,381 L80,383.75 L83.75,385 L86,388.5 L87.5,388.5 L96.25,388.5 L103.75,388.5 L113.75,388.5 L118.75,388.5 L119.5,388.5 L122.5,385 L131.25,386 L136.25,381 L142.5,378.75 L150,373 L158.75,367.5 L163.75,372 L167.5,369.5 L172.5,358.75 L178.75,358.75 L182.5,361 L190,360 L195,365 L198.75,370 L207.5,370.5 L212.5,373.75 L217.5,381 L222.5,378.75 L230,383.75 L237.5,378.75 L243.75,381 L250,380.5 L256.25,373 L261.25,373 L265,377.5 L269,388.5 L270,388.5 L275,388.5 L276,388.5 L279,386.25 L291.5,388 L296.5,375 L301.5,368 L306.5,372.5 L311.5,363.75 L320.25,364.5 L326.5,372.5 L331.5,377.5 L336.5,381.25 L346.5,383.75 L354,379.5 L359,373.75 L365.25,379.5 L376.5,373.75 L384,378 L391.5,379.5 L399,380 L404.5,388 L409,377 L415.25,377 L419,380.5 L424,378.75 L429,381.25 L436.5,371.25 L444,367.5 L450.25,367 L455.25,371.25 L462.75,362 L467.75,369.5 L474,372.5 L484,368.75 L489.75,355.5 L494,365.5 L500.25,364.5 L509,367.5 L516.5,365.5 L521.5,370 L526.5,369.5 L530.25,372 L536.5,369.5 L541.25,370 L545,373.75 L552.5,374.5 L557.5,373.75 L566.25,361.25 L570,362 L575,370 L580,372.5 L587.5,371.25 L595,361.25 L601.25,353.75 L606.25,358.75 L612.5,357 L619.5,357 L623.75,372.5 L632.5,374.5 L637.5,372.5 L650,372 L655,379.5 L662.5,376.25 L670,377 L677.5,381.25 L685,378.75 L692.5,379.5 L700,381.25 L705,386.25 L708.75,376.25 L713.75,378.75 L717.5,377 L721.25,378 L726.25,376.25 L732.5,379.5 L740,382.5 L748,385 L753.75,372 L757.5,365 L762,360 L766.25,366.25 L771.25,362 L776.25,364.5 L780,362.5 L785,363 L792.5,360.5 L797.5,361.25 L802.5,362.5 L807,371.25 L811.25,362.5 L816.25,367.5 L820,369.5 L827.5,368 L833.75,370 L838,364.5 L842.5,367.5 L846.25,346.25 L848.75,344.5 L852.5,345 L855.5,346.25 L855.5,389 L16.5,389 Z" fill="url(#rsig)"/>
</g>
<rect x="16" y="350.2" width="840" height="2" fill="#1616a8"/>
<rect x="16" y="387.8" width="840" height="2" fill="#1616a8"/>
<line x1="16.5" y1="366.25" x2="22.5" y2="370" stroke="#e8842a" stroke-width="1.05" stroke-linecap="round"/>
<line x1="22.5" y1="370" x2="28" y2="362.5" stroke="#e8842a" stroke-width="1.05" stroke-linecap="round"/>
<line x1="28" y1="362.5" x2="33.75" y2="368.75" stroke="#e8842a" stroke-width="1.05" stroke-linecap="round"/>
<line x1="33.75" y1="368.75" x2="40" y2="370" stroke="#e8842a" stroke-width="1.05" stroke-linecap="round"/>
<line x1="40" y1="370" x2="46.25" y2="368" stroke="#e8842a" stroke-width="1.05" stroke-linecap="round"/>
<line x1="46.25" y1="368" x2="51.25" y2="367" stroke="#e8842a" stroke-width="1.05" stroke-linecap="round"/>
<line x1="51.25" y1="367" x2="55" y2="373.75" stroke="#e8842a" stroke-width="1.05" stroke-linecap="round"/>
<line x1="55" y1="373.75" x2="60" y2="378" stroke="#e8842a" stroke-width="1.05" stroke-linecap="round"/>
<line x1="60" y1="378" x2="70" y2="381" stroke="#e8842a" stroke-width="1.05" stroke-linecap="round"/>
<line x1="70" y1="381" x2="80" y2="383.75" stroke="#e8842a" stroke-width="1.05" stroke-linecap="round"/>
<line x1="80" y1="383.75" x2="83.75" y2="385" stroke="#e8842a" stroke-width="1.05" stroke-linecap="round"/>
<line x1="83.75" y1="385" x2="86" y2="388.75" stroke="#20d020" stroke-width="1.05" stroke-linecap="round"/>
<line x1="86" y1="388.75" x2="87.5" y2="391" stroke="#20d020" stroke-width="1.05" stroke-linecap="round"/>
<line x1="87.5" y1="391" x2="96.25" y2="395.5" stroke="#20d020" stroke-width="1.05" stroke-linecap="round"/>
<line x1="96.25" y1="395.5" x2="103.75" y2="390.5" stroke="#20d020" stroke-width="1.05" stroke-linecap="round"/>
<line x1="103.75" y1="390.5" x2="113.75" y2="395.5" stroke="#20d020" stroke-width="1.05" stroke-linecap="round"/>
<line x1="113.75" y1="395.5" x2="118.75" y2="390" stroke="#20d020" stroke-width="1.05" stroke-linecap="round"/>
<line x1="118.75" y1="390" x2="119.5" y2="388.75" stroke="#e8842a" stroke-width="1.05" stroke-linecap="round"/>
<line x1="119.5" y1="388.75" x2="122.5" y2="385" stroke="#e8842a" stroke-width="1.05" stroke-linecap="round"/>
<line x1="122.5" y1="385" x2="131.25" y2="386" stroke="#e8842a" stroke-width="1.05" stroke-linecap="round"/>
<line x1="131.25" y1="386" x2="136.25" y2="381" stroke="#e8842a" stroke-width="1.05" stroke-linecap="round"/>
<line x1="136.25" y1="381" x2="142.5" y2="378.75" stroke="#e8842a" stroke-width="1.05" stroke-linecap="round"/>
<line x1="142.5" y1="378.75" x2="150" y2="373" stroke="#e8842a" stroke-width="1.05" stroke-linecap="round"/>
<line x1="150" y1="373" x2="158.75" y2="367.5" stroke="#e8842a" stroke-width="1.05" stroke-linecap="round"/>
<line x1="158.75" y1="367.5" x2="163.75" y2="372" stroke="#e8842a" stroke-width="1.05" stroke-linecap="round"/>
<line x1="163.75" y1="372" x2="167.5" y2="369.5" stroke="#e8842a" stroke-width="1.05" stroke-linecap="round"/>
<line x1="167.5" y1="369.5" x2="172.5" y2="358.75" stroke="#e8842a" stroke-width="1.05" stroke-linecap="round"/>
<line x1="172.5" y1="358.75" x2="178.75" y2="358.75" stroke="#e8842a" stroke-width="1.05" stroke-linecap="round"/>
<line x1="178.75" y1="358.75" x2="182.5" y2="361" stroke="#e8842a" stroke-width="1.05" stroke-linecap="round"/>
<line x1="182.5" y1="361" x2="190" y2="360" stroke="#e8842a" stroke-width="1.05" stroke-linecap="round"/>
<line x1="190" y1="360" x2="195" y2="365" stroke="#e8842a" stroke-width="1.05" stroke-linecap="round"/>
<line x1="195" y1="365" x2="198.75" y2="370" stroke="#e8842a" stroke-width="1.05" stroke-linecap="round"/>
<line x1="198.75" y1="370" x2="207.5" y2="370.5" stroke="#e8842a" stroke-width="1.05" stroke-linecap="round"/>
<line x1="207.5" y1="370.5" x2="212.5" y2="373.75" stroke="#e8842a" stroke-width="1.05" stroke-linecap="round"/>
<line x1="212.5" y1="373.75" x2="217.5" y2="381" stroke="#e8842a" stroke-width="1.05" stroke-linecap="round"/>
<line x1="217.5" y1="381" x2="222.5" y2="378.75" stroke="#e8842a" stroke-width="1.05" stroke-linecap="round"/>
<line x1="222.5" y1="378.75" x2="230" y2="383.75" stroke="#e8842a" stroke-width="1.05" stroke-linecap="round"/>
<line x1="230" y1="383.75" x2="237.5" y2="378.75" stroke="#e8842a" stroke-width="1.05" stroke-linecap="round"/>
<line x1="237.5" y1="378.75" x2="243.75" y2="381" stroke="#e8842a" stroke-width="1.05" stroke-linecap="round"/>
<line x1="243.75" y1="381" x2="250" y2="380.5" stroke="#e8842a" stroke-width="1.05" stroke-linecap="round"/>
<line x1="250" y1="380.5" x2="256.25" y2="373" stroke="#e8842a" stroke-width="1.05" stroke-linecap="round"/>
<line x1="256.25" y1="373" x2="261.25" y2="373" stroke="#e8842a" stroke-width="1.05" stroke-linecap="round"/>
<line x1="261.25" y1="373" x2="265" y2="377.5" stroke="#e8842a" stroke-width="1.05" stroke-linecap="round"/>
<line x1="265" y1="377.5" x2="269" y2="388.75" stroke="#20d020" stroke-width="1.05" stroke-linecap="round"/>
<line x1="269" y1="388.75" x2="270" y2="390" stroke="#20d020" stroke-width="1.05" stroke-linecap="round"/>
<line x1="270" y1="390" x2="275" y2="390.5" stroke="#20d020" stroke-width="1.05" stroke-linecap="round"/>
<line x1="275" y1="390.5" x2="276" y2="388.75" stroke="#e8842a" stroke-width="1.05" stroke-linecap="round"/>
<line x1="276" y1="388.75" x2="279" y2="386.25" stroke="#e8842a" stroke-width="1.05" stroke-linecap="round"/>
<line x1="279" y1="386.25" x2="291.5" y2="388" stroke="#e8842a" stroke-width="1.05" stroke-linecap="round"/>
<line x1="291.5" y1="388" x2="296.5" y2="375" stroke="#e8842a" stroke-width="1.05" stroke-linecap="round"/>
<line x1="296.5" y1="375" x2="301.5" y2="368" stroke="#e8842a" stroke-width="1.05" stroke-linecap="round"/>
<line x1="301.5" y1="368" x2="306.5" y2="372.5" stroke="#e8842a" stroke-width="1.05" stroke-linecap="round"/>
<line x1="306.5" y1="372.5" x2="311.5" y2="363.75" stroke="#e8842a" stroke-width="1.05" stroke-linecap="round"/>
<line x1="311.5" y1="363.75" x2="320.25" y2="364.5" stroke="#e8842a" stroke-width="1.05" stroke-linecap="round"/>
<line x1="320.25" y1="364.5" x2="326.5" y2="372.5" stroke="#e8842a" stroke-width="1.05" stroke-linecap="round"/>
<line x1="326.5" y1="372.5" x2="331.5" y2="377.5" stroke="#e8842a" stroke-width="1.05" stroke-linecap="round"/>
<line x1="331.5" y1="377.5" x2="336.5" y2="381.25" stroke="#e8842a" stroke-width="1.05" stroke-linecap="round"/>
<line x1="336.5" y1="381.25" x2="346.5" y2="383.75" stroke="#e8842a" stroke-width="1.05" stroke-linecap="round"/>
<line x1="346.5" y1="383.75" x2="354" y2="379.5" stroke="#e8842a" stroke-width="1.05" stroke-linecap="round"/>
<line x1="354" y1="379.5" x2="359" y2="373.75" stroke="#e8842a" stroke-width="1.05" stroke-linecap="round"/>
<line x1="359" y1="373.75" x2="365.25" y2="379.5" stroke="#e8842a" stroke-width="1.05" stroke-linecap="round"/>
<line x1="365.25" y1="379.5" x2="376.5" y2="373.75" stroke="#e8842a" stroke-width="1.05" stroke-linecap="round"/>
<line x1="376.5" y1="373.75" x2="384" y2="378" stroke="#e8842a" stroke-width="1.05" stroke-linecap="round"/>
<line x1="384" y1="378" x2="391.5" y2="379.5" stroke="#e8842a" stroke-width="1.05" stroke-linecap="round"/>
<line x1="391.5" y1="379.5" x2="399" y2="380" stroke="#e8842a" stroke-width="1.05" stroke-linecap="round"/>
<line x1="399" y1="380" x2="404.5" y2="388" stroke="#e8842a" stroke-width="1.05" stroke-linecap="round"/>
<line x1="404.5" y1="388" x2="409" y2="377" stroke="#e8842a" stroke-width="1.05" stroke-linecap="round"/>
<line x1="409" y1="377" x2="415.25" y2="377" stroke="#e8842a" stroke-width="1.05" stroke-linecap="round"/>
<line x1="415.25" y1="377" x2="419" y2="380.5" stroke="#e8842a" stroke-width="1.05" stroke-linecap="round"/>
<line x1="419" y1="380.5" x2="424" y2="378.75" stroke="#e8842a" stroke-width="1.05" stroke-linecap="round"/>
<line x1="424" y1="378.75" x2="429" y2="381.25" stroke="#e8842a" stroke-width="1.05" stroke-linecap="round"/>
<line x1="429" y1="381.25" x2="436.5" y2="371.25" stroke="#e8842a" stroke-width="1.05" stroke-linecap="round"/>
<line x1="436.5" y1="371.25" x2="444" y2="367.5" stroke="#e8842a" stroke-width="1.05" stroke-linecap="round"/>
<line x1="444" y1="367.5" x2="450.25" y2="367" stroke="#e8842a" stroke-width="1.05" stroke-linecap="round"/>
<line x1="450.25" y1="367" x2="455.25" y2="371.25" stroke="#e8842a" stroke-width="1.05" stroke-linecap="round"/>
<line x1="455.25" y1="371.25" x2="462.75" y2="362" stroke="#e8842a" stroke-width="1.05" stroke-linecap="round"/>
<line x1="462.75" y1="362" x2="467.75" y2="369.5" stroke="#e8842a" stroke-width="1.05" stroke-linecap="round"/>
<line x1="467.75" y1="369.5" x2="474" y2="372.5" stroke="#e8842a" stroke-width="1.05" stroke-linecap="round"/>
<line x1="474" y1="372.5" x2="484" y2="368.75" stroke="#e8842a" stroke-width="1.05" stroke-linecap="round"/>
<line x1="484" y1="368.75" x2="489.75" y2="355.5" stroke="#e8842a" stroke-width="1.05" stroke-linecap="round"/>
<line x1="489.75" y1="355.5" x2="494" y2="365.5" stroke="#e8842a" stroke-width="1.05" stroke-linecap="round"/>
<line x1="494" y1="365.5" x2="500.25" y2="364.5" stroke="#e8842a" stroke-width="1.05" stroke-linecap="round"/>
<line x1="500.25" y1="364.5" x2="509" y2="367.5" stroke="#e8842a" stroke-width="1.05" stroke-linecap="round"/>
<line x1="509" y1="367.5" x2="516.5" y2="365.5" stroke="#e8842a" stroke-width="1.05" stroke-linecap="round"/>
<line x1="516.5" y1="365.5" x2="521.5" y2="370" stroke="#e8842a" stroke-width="1.05" stroke-linecap="round"/>
<line x1="521.5" y1="370" x2="526.5" y2="369.5" stroke="#e8842a" stroke-width="1.05" stroke-linecap="round"/>
<line x1="526.5" y1="369.5" x2="530.25" y2="372" stroke="#e8842a" stroke-width="1.05" stroke-linecap="round"/>
<line x1="530.25" y1="372" x2="536.5" y2="369.5" stroke="#e8842a" stroke-width="1.05" stroke-linecap="round"/>
<line x1="536.5" y1="369.5" x2="541.25" y2="370" stroke="#e8842a" stroke-width="1.05" stroke-linecap="round"/>
<line x1="541.25" y1="370" x2="545" y2="373.75" stroke="#e8842a" stroke-width="1.05" stroke-linecap="round"/>
<line x1="545" y1="373.75" x2="552.5" y2="374.5" stroke="#e8842a" stroke-width="1.05" stroke-linecap="round"/>
<line x1="552.5" y1="374.5" x2="557.5" y2="373.75" stroke="#e8842a" stroke-width="1.05" stroke-linecap="round"/>
<line x1="557.5" y1="373.75" x2="566.25" y2="361.25" stroke="#e8842a" stroke-width="1.05" stroke-linecap="round"/>
<line x1="566.25" y1="361.25" x2="570" y2="362" stroke="#e8842a" stroke-width="1.05" stroke-linecap="round"/>
<line x1="570" y1="362" x2="575" y2="370" stroke="#e8842a" stroke-width="1.05" stroke-linecap="round"/>
<line x1="575" y1="370" x2="580" y2="372.5" stroke="#e8842a" stroke-width="1.05" stroke-linecap="round"/>
<line x1="580" y1="372.5" x2="587.5" y2="371.25" stroke="#e8842a" stroke-width="1.05" stroke-linecap="round"/>
<line x1="587.5" y1="371.25" x2="595" y2="361.25" stroke="#e8842a" stroke-width="1.05" stroke-linecap="round"/>
<line x1="595" y1="361.25" x2="601.25" y2="353.75" stroke="#e8842a" stroke-width="1.05" stroke-linecap="round"/>
<line x1="601.25" y1="353.75" x2="606.25" y2="358.75" stroke="#e8842a" stroke-width="1.05" stroke-linecap="round"/>
<line x1="606.25" y1="358.75" x2="612.5" y2="357" stroke="#e8842a" stroke-width="1.05" stroke-linecap="round"/>
<line x1="612.5" y1="357" x2="619.5" y2="357" stroke="#e8842a" stroke-width="1.05" stroke-linecap="round"/>
<line x1="619.5" y1="357" x2="623.75" y2="372.5" stroke="#e8842a" stroke-width="1.05" stroke-linecap="round"/>
<line x1="623.75" y1="372.5" x2="632.5" y2="374.5" stroke="#e8842a" stroke-width="1.05" stroke-linecap="round"/>
<line x1="632.5" y1="374.5" x2="637.5" y2="372.5" stroke="#e8842a" stroke-width="1.05" stroke-linecap="round"/>
<line x1="637.5" y1="372.5" x2="650" y2="372" stroke="#e8842a" stroke-width="1.05" stroke-linecap="round"/>
<line x1="650" y1="372" x2="655" y2="379.5" stroke="#e8842a" stroke-width="1.05" stroke-linecap="round"/>
<line x1="655" y1="379.5" x2="662.5" y2="376.25" stroke="#e8842a" stroke-width="1.05" stroke-linecap="round"/>
<line x1="662.5" y1="376.25" x2="670" y2="377" stroke="#e8842a" stroke-width="1.05" stroke-linecap="round"/>
<line x1="670" y1="377" x2="677.5" y2="381.25" stroke="#e8842a" stroke-width="1.05" stroke-linecap="round"/>
<line x1="677.5" y1="381.25" x2="685" y2="378.75" stroke="#e8842a" stroke-width="1.05" stroke-linecap="round"/>
<line x1="685" y1="378.75" x2="692.5" y2="379.5" stroke="#e8842a" stroke-width="1.05" stroke-linecap="round"/>
<line x1="692.5" y1="379.5" x2="700" y2="381.25" stroke="#e8842a" stroke-width="1.05" stroke-linecap="round"/>
<line x1="700" y1="381.25" x2="705" y2="386.25" stroke="#e8842a" stroke-width="1.05" stroke-linecap="round"/>
<line x1="705" y1="386.25" x2="708.75" y2="376.25" stroke="#e8842a" stroke-width="1.05" stroke-linecap="round"/>
<line x1="708.75" y1="376.25" x2="713.75" y2="378.75" stroke="#e8842a" stroke-width="1.05" stroke-linecap="round"/>
<line x1="713.75" y1="378.75" x2="717.5" y2="377" stroke="#e8842a" stroke-width="1.05" stroke-linecap="round"/>
<line x1="717.5" y1="377" x2="721.25" y2="378" stroke="#e8842a" stroke-width="1.05" stroke-linecap="round"/>
<line x1="721.25" y1="378" x2="726.25" y2="376.25" stroke="#e8842a" stroke-width="1.05" stroke-linecap="round"/>
<line x1="726.25" y1="376.25" x2="732.5" y2="379.5" stroke="#e8842a" stroke-width="1.05" stroke-linecap="round"/>
<line x1="732.5" y1="379.5" x2="740" y2="382.5" stroke="#e8842a" stroke-width="1.05" stroke-linecap="round"/>
<line x1="740" y1="382.5" x2="748" y2="385" stroke="#e8842a" stroke-width="1.05" stroke-linecap="round"/>
<line x1="748" y1="385" x2="753.75" y2="372" stroke="#e8842a" stroke-width="1.05" stroke-linecap="round"/>
<line x1="753.75" y1="372" x2="757.5" y2="365" stroke="#e8842a" stroke-width="1.05" stroke-linecap="round"/>
<line x1="757.5" y1="365" x2="762" y2="360" stroke="#e8842a" stroke-width="1.05" stroke-linecap="round"/>
<line x1="762" y1="360" x2="766.25" y2="366.25" stroke="#e8842a" stroke-width="1.05" stroke-linecap="round"/>
<line x1="766.25" y1="366.25" x2="771.25" y2="362" stroke="#e8842a" stroke-width="1.05" stroke-linecap="round"/>
<line x1="771.25" y1="362" x2="776.25" y2="364.5" stroke="#e8842a" stroke-width="1.05" stroke-linecap="round"/>
<line x1="776.25" y1="364.5" x2="780" y2="362.5" stroke="#e8842a" stroke-width="1.05" stroke-linecap="round"/>
<line x1="780" y1="362.5" x2="785" y2="363" stroke="#e8842a" stroke-width="1.05" stroke-linecap="round"/>
<line x1="785" y1="363" x2="792.5" y2="360.5" stroke="#e8842a" stroke-width="1.05" stroke-linecap="round"/>
<line x1="792.5" y1="360.5" x2="797.5" y2="361.25" stroke="#e8842a" stroke-width="1.05" stroke-linecap="round"/>
<line x1="797.5" y1="361.25" x2="802.5" y2="362.5" stroke="#e8842a" stroke-width="1.05" stroke-linecap="round"/>
<line x1="802.5" y1="362.5" x2="807" y2="371.25" stroke="#e8842a" stroke-width="1.05" stroke-linecap="round"/>
<line x1="807" y1="371.25" x2="811.25" y2="362.5" stroke="#e8842a" stroke-width="1.05" stroke-linecap="round"/>
<line x1="811.25" y1="362.5" x2="816.25" y2="367.5" stroke="#e8842a" stroke-width="1.05" stroke-linecap="round"/>
<line x1="816.25" y1="367.5" x2="820" y2="369.5" stroke="#e8842a" stroke-width="1.05" stroke-linecap="round"/>
<line x1="820" y1="369.5" x2="827.5" y2="368" stroke="#e8842a" stroke-width="1.05" stroke-linecap="round"/>
<line x1="827.5" y1="368" x2="833.75" y2="370" stroke="#e8842a" stroke-width="1.05" stroke-linecap="round"/>
<line x1="833.75" y1="370" x2="838" y2="364.5" stroke="#e8842a" stroke-width="1.05" stroke-linecap="round"/>
<line x1="838" y1="364.5" x2="842.5" y2="367.5" stroke="#d020d0" stroke-width="1.05" stroke-linecap="round"/>
<line x1="842.5" y1="367.5" x2="846.25" y2="346.25" stroke="#d020d0" stroke-width="1.05" stroke-linecap="round"/>
<line x1="846.25" y1="346.25" x2="848.75" y2="344.5" stroke="#d020d0" stroke-width="1.05" stroke-linecap="round"/>
<line x1="848.75" y1="344.5" x2="852.5" y2="345" stroke="#d020d0" stroke-width="1.05" stroke-linecap="round"/>
<line x1="852.5" y1="345" x2="855.5" y2="346.25" stroke="#d020d0" stroke-width="1.05" stroke-linecap="round"/>
<rect x="16.5" y="38.5" width="876" height="224.0" fill="none" stroke="#a9bccd" stroke-width="1"/>
<rect x="16.5" y="268.5" width="876" height="68.0" fill="none" stroke="#a9bccd" stroke-width="1"/>
<rect x="16.5" y="342.5" width="876" height="56.0" fill="none" stroke="#a9bccd" stroke-width="1"/>
<line x1="46.5" y1="398" x2="46.5" y2="402" stroke="#a9bccd" stroke-width="1"/>
<line x1="73.5" y1="398" x2="73.5" y2="402" stroke="#a9bccd" stroke-width="1"/>
<line x1="100.5" y1="398" x2="100.5" y2="402" stroke="#a9bccd" stroke-width="1"/>
<line x1="127.5" y1="398" x2="127.5" y2="402" stroke="#a9bccd" stroke-width="1"/>
<line x1="154.5" y1="398" x2="154.5" y2="402" stroke="#a9bccd" stroke-width="1"/>
<line x1="180.5" y1="398" x2="180.5" y2="402" stroke="#a9bccd" stroke-width="1"/>
<line x1="207.5" y1="398" x2="207.5" y2="402" stroke="#a9bccd" stroke-width="1"/>
<line x1="234.5" y1="398" x2="234.5" y2="402" stroke="#a9bccd" stroke-width="1"/>
<line x1="261.5" y1="398" x2="261.5" y2="402" stroke="#a9bccd" stroke-width="1"/>
<line x1="288.5" y1="398" x2="288.5" y2="402" stroke="#a9bccd" stroke-width="1"/>
<line x1="315.5" y1="398" x2="315.5" y2="402" stroke="#a9bccd" stroke-width="1"/>
<line x1="341.5" y1="398" x2="341.5" y2="402" stroke="#a9bccd" stroke-width="1"/>
<line x1="368.5" y1="398" x2="368.5" y2="402" stroke="#a9bccd" stroke-width="1"/>
<line x1="395.5" y1="398" x2="395.5" y2="402" stroke="#a9bccd" stroke-width="1"/>
<line x1="422.5" y1="398" x2="422.5" y2="402" stroke="#a9bccd" stroke-width="1"/>
<line x1="449.5" y1="398" x2="449.5" y2="402" stroke="#a9bccd" stroke-width="1"/>
<line x1="476.5" y1="398" x2="476.5" y2="402" stroke="#a9bccd" stroke-width="1"/>
<line x1="502.5" y1="398" x2="502.5" y2="402" stroke="#a9bccd" stroke-width="1"/>
<line x1="529.5" y1="398" x2="529.5" y2="402" stroke="#a9bccd" stroke-width="1"/>
<line x1="556.5" y1="398" x2="556.5" y2="402" stroke="#a9bccd" stroke-width="1"/>
<line x1="583.5" y1="398" x2="583.5" y2="402" stroke="#a9bccd" stroke-width="1"/>
<line x1="610.5" y1="398" x2="610.5" y2="402" stroke="#a9bccd" stroke-width="1"/>
<line x1="636.5" y1="398" x2="636.5" y2="402" stroke="#a9bccd" stroke-width="1"/>
<line x1="663.5" y1="398" x2="663.5" y2="402" stroke="#a9bccd" stroke-width="1"/>
<line x1="690.5" y1="398" x2="690.5" y2="402" stroke="#a9bccd" stroke-width="1"/>
<line x1="717.5" y1="398" x2="717.5" y2="402" stroke="#a9bccd" stroke-width="1"/>
<line x1="744.5" y1="398" x2="744.5" y2="402" stroke="#a9bccd" stroke-width="1"/>
<line x1="771.5" y1="398" x2="771.5" y2="402" stroke="#a9bccd" stroke-width="1"/>
<line x1="797.5" y1="398" x2="797.5" y2="402" stroke="#a9bccd" stroke-width="1"/>
<line x1="824.5" y1="398" x2="824.5" y2="402" stroke="#a9bccd" stroke-width="1"/>
<line x1="851.5" y1="398" x2="851.5" y2="402" stroke="#a9bccd" stroke-width="1"/>
<line x1="878.5" y1="398" x2="878.5" y2="402" stroke="#a9bccd" stroke-width="1"/>
<rect x="15.5" y="376" width="2" height="26" fill="#d8ecec"/>
<rect x="528.5" y="376" width="2" height="26" fill="#d8ecec"/>
</svg>
<div class="lt" style="left:17px;padding-left:0.5px;color:#0a0ae6">Exponential_Moving_Average</div>
<div class="lt" style="left:155px;padding-left:0.2px;color:#e8141e">Exponential_Moving_Average</div>
<div id="legend"><div class="ic" style="left:4px;background:linear-gradient(#ea4a58,#c81e30);border:1px solid #c02838;box-sizing:border-box"></div><div class="ic" style="left:17px;background:linear-gradient(#3cb0ea,#1585c8);border:1px solid #1a7ab8;box-sizing:border-box"></div></div>
<div class="ind" style="top:269px;height:12.5px;line-height:15px;padding-right:2px;overflow:hidden;color:#0a0a8c;transform:scaleX(0.873)">MACD</div>
<div class="ind" style="top:344px;color:#f08a30;transform:scaleX(0.84)">RSI</div>
<div class="dl" style="left:31.5px">6</div><div class="dl" style="left:58.3px">7</div><div class="dl" style="left:85.1px">10</div><div class="dl" style="left:112.0px">11</div><div class="dl" style="left:138.8px">12</div><div class="dl" style="left:165.6px">13</div><div class="dl" style="left:192.4px">14</div><div class="dl" style="left:219.3px">17</div><div class="dl" style="left:246.1px">18</div><div class="dl" style="left:272.9px">19</div><div class="dl" style="left:299.8px">20</div><div class="dl" style="left:326.6px">21</div><div class="dl" style="left:353.4px">24</div><div class="dl" style="left:380.2px">25</div><div class="dl" style="left:407.1px">26</div><div class="dl" style="left:433.9px">27</div><div class="dl" style="left:460.7px">28</div><div class="dl" style="left:487.5px">31</div><div class="dl" style="left:514.4px">1</div><div class="dl" style="left:541.2px">2</div><div class="dl" style="left:568.0px">3</div><div class="dl" style="left:594.8px">4</div><div class="dl" style="left:621.6px">7</div><div class="dl" style="left:648.5px">8</div><div class="dl" style="left:675.3px">9</div><div class="dl" style="left:702.1px">10</div><div class="dl" style="left:728.9px">11</div><div class="dl" style="left:755.8px">14</div><div class="dl" style="left:782.6px">15</div><div class="dl" style="left:809.4px">16</div><div class="dl" style="left:836.2px">17</div><div class="dl" style="left:863.1px">18</div><div class="pl" style="top:60.0px">0.9150</div><div class="pl" style="top:102.0px">0.9100</div><div class="pl" style="top:144.0px">0.9050</div><div class="pl" style="top:185.0px">0.9000</div><div class="pl" style="top:227.0px">0.8950</div><div class="pl" style="top:284.5px">+0.000</div><div class="pl" style="top:365.5px">50</div>
<div id="cur"><span style="display:inline-block;transform:scaleX(0.966);transform-origin:0 50%">0.9085</span></div>
<div class="mon" style="left:17px;width:63px">Май 2021</div>
<div class="mon" style="left:530px;width:70px">Июнь 2021</div>
</body></html>
